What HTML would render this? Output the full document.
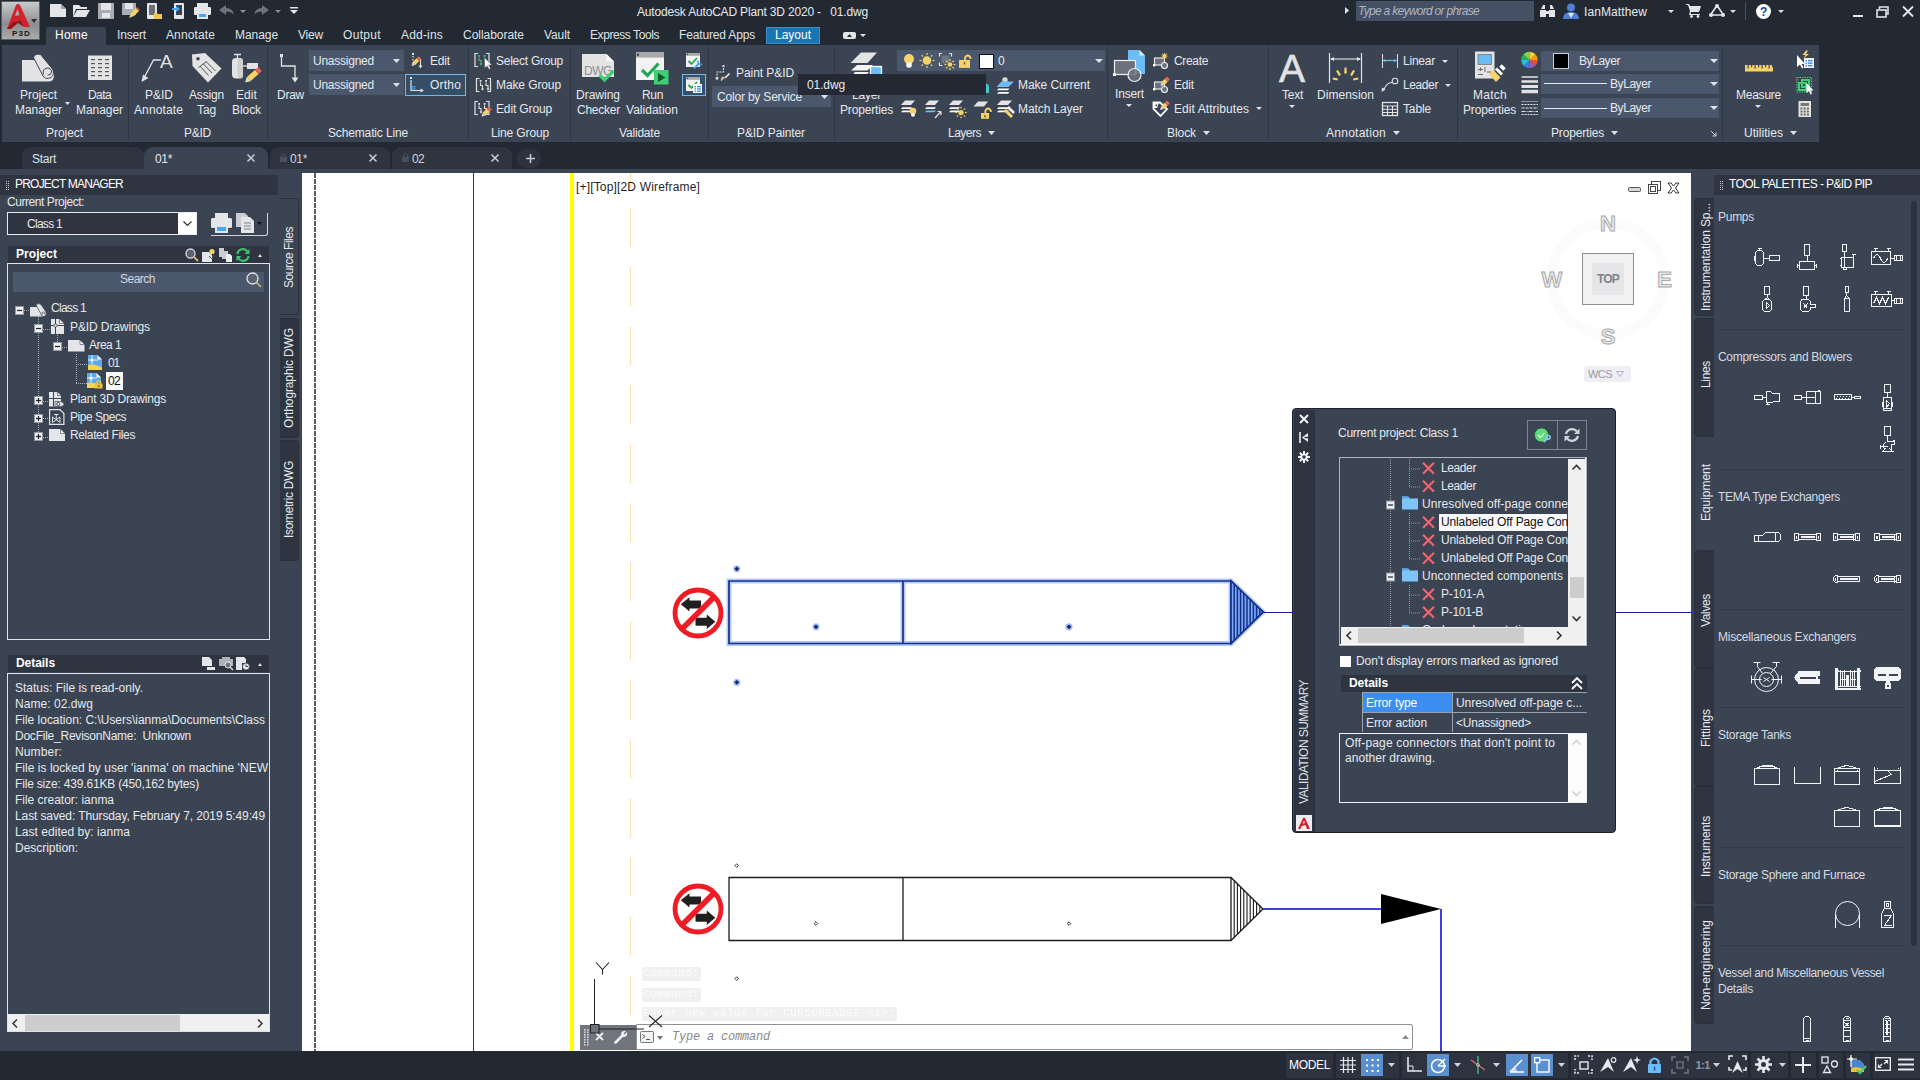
<!DOCTYPE html>
<html lang="en"><head><meta charset="utf-8"><title>Autodesk AutoCAD Plant 3D 2020 - 01.dwg</title>
<style>
html,body{margin:0;padding:0;}
body{width:1920px;height:1080px;overflow:hidden;position:relative;background:#222933;font-family:"Liberation Sans",sans-serif;font-size:12px;color:#e6e9ee;}
div,span.t,svg{position:absolute;}
span.t{white-space:pre;}
svg{overflow:visible;}
</style></head><body>
<div style="left:0px;top:0px;width:1920px;height:45px;background:#222933;"></div>
<div style="left:1px;top:1px;width:39px;height:39px;background:linear-gradient(#c9cacc,#8b8d90 60%,#a9abad);border:1px solid #5a5d63;box-sizing:border-box;"></div>
<svg style="left:4px;top:2px;" width="28" height="30" viewBox="0 0 28 30"><path d="M3 27 L12 3 Q14 1 16 3 L26 25 L20 25 L17 18 L9 20 L7 27Z M11 14 L15.5 13 L13.5 7Z" fill="#d3222a" fill-rule="evenodd"/><path d="M3 27 L9 20 L17 18 L20 25 L14 21 L7 27Z" fill="#9c1118"/></svg>
<span class="t" style="left:12px;top:23.5px;height:20px;line-height:20px;font-size:8px;color:#1a1a1a;letter-spacing:1.146px;font-weight:bold;">P3D</span>
<svg style="left:31px;top:19px;" width="6" height="4" viewBox="0 0 6 4"><path d="M0 0H6L3.0 4Z" fill="#2a2d33"/></svg>
<svg style="left:50px;top:4px;" width="17" height="14" viewBox="0 0 17 14"><path d="M0 0H11L16 5V13H0Z" fill="#e3e5e8"/><path d="M11 0V5H16" fill="#9fa4ab"/></svg>
<svg style="left:73px;top:4px;" width="17" height="14" viewBox="0 0 17 14"><path d="M0 1H6L8 3H14V5H3L0 13Z" fill="#e3e5e8"/><path d="M4 6H17L13 13H0Z" fill="#e3e5e8"/></svg>
<svg style="left:98px;top:3px;" width="16" height="16" viewBox="0 0 16 16"><path d="M0 0H16V16H0Z" fill="#a9adb3"/><path d="M3 0H13V7H3Z" fill="#e3e5e8"/><path d="M4 10H12V15H4Z" fill="#e3e5e8"/></svg>
<svg style="left:122px;top:3px;" width="17" height="16" viewBox="0 0 17 16"><path d="M0 0H14V12H0Z" fill="#a9adb3"/><path d="M3 0H11V6H3Z" fill="#e3e5e8"/><path d="M7 15L9 10L14 5L17 8L12 13Z" fill="#f0d36a"/><path d="M14 5L15 4L18 7L17 8Z" fill="#e0524a"/></svg>
<svg style="left:147px;top:3px;" width="16" height="16" viewBox="0 0 16 16"><rect x="0" y="0" width="10" height="16" rx="1" fill="#e3e5e8"/><rect x="2" y="2" width="6" height="10" fill="#6a6f78"/><path d="M7 10H10L11 11H15V16H7Z" fill="#f1c84b"/></svg>
<svg style="left:172px;top:3px;" width="13" height="16" viewBox="0 0 13 16"><rect x="2" y="0" width="10" height="16" rx="1" fill="#e3e5e8"/><rect x="4" y="2" width="6" height="10" fill="#3a4150"/><path d="M0 5H4V3L8 6L4 9V7H0Z" fill="#3fa9f5"/></svg>
<svg style="left:194px;top:3px;" width="17" height="16" viewBox="0 0 17 16"><path d="M3 0H14V5H3Z" fill="#e3e5e8"/><rect x="0" y="4" width="17" height="8" rx="1" fill="#e3e5e8"/><path d="M3 9H14V16H3Z" fill="#e3e5e8"/><rect x="5" y="11" width="7" height="3" fill="#3fa9f5"/></svg>
<svg style="left:219px;top:5px;" width="15" height="10" viewBox="0 0 15 10"><path d="M0 5L7 0V3Q14 3 15 10Q12 6 7 7V10Z" fill="#6d737d"/></svg>
<svg style="left:240px;top:10px;" width="6" height="3" viewBox="0 0 6 3"><path d="M0 0H6L3.0 3Z" fill="#8b9098"/></svg>
<svg style="left:254px;top:5px;" width="15" height="10" viewBox="0 0 15 10"><path d="M15 5L8 0V3Q1 3 0 10Q3 6 8 7V10Z" fill="#6d737d"/></svg>
<svg style="left:275px;top:10px;" width="6" height="3" viewBox="0 0 6 3"><path d="M0 0H6L3.0 3Z" fill="#8b9098"/></svg>
<svg style="left:290px;top:7px;" width="8" height="7" viewBox="0 0 8 7"><path d="M0 0H8V1.5H0Z M0 3H8L4 7Z" fill="#e3e5e8"/></svg>
<span class="t" style="left:637px;top:2px;height:20px;line-height:20px;font-size:12px;color:#e6e9ee;letter-spacing:-0.174px;">Autodesk AutoCAD Plant 3D 2020 -   01.dwg</span>
<svg style="left:1345px;top:7px;" width="4" height="7" viewBox="0 0 4 7"><path d="M0 0L4 3.5L0 7Z" fill="#e3e5e8"/></svg>
<div style="left:1356px;top:1px;width:178px;height:20px;background:#465064;"></div>
<span class="t" style="left:1358px;top:1px;height:20px;line-height:20px;font-size:12px;color:#aeb6c2;letter-spacing:-0.702px;font-style:italic;">Type a keyword or phrase</span>
<svg style="left:1540px;top:4px;" width="15" height="14" viewBox="0 0 15 14"><path d="M1 5L3 1H5V5ZM10 5V1H12L14 5Z M0 6H6V13H0Z M9 6H15V13H9Z M6 7H9V10H6Z" fill="#e3e5e8"/></svg>
<svg style="left:1563px;top:3px;" width="16" height="16" viewBox="0 0 16 16"><circle cx="8" cy="4.5" r="4" fill="#4f7fd6"/><path d="M0 16Q0 9 8 9Q16 9 16 16Z" fill="#4f7fd6"/><path d="M5 10L8 15L11 10Z" fill="#e3e5e8"/></svg>
<span class="t" style="left:1584px;top:2px;height:20px;line-height:20px;font-size:12px;color:#e6e9ee;letter-spacing:0.097px;">IanMatthew</span>
<svg style="left:1668px;top:10px;" width="6" height="3" viewBox="0 0 6 3"><path d="M0 0H6L3.0 3Z" fill="#dfe3e8"/></svg>
<svg style="left:1686px;top:4px;" width="15" height="14" viewBox="0 0 15 14"><path d="M0 0H3L4 2H15L13 8H5L4.5 10H14V11H3L4 7L2 1H0Z" fill="#e3e5e8"/><circle cx="5.5" cy="12.5" r="1.4" fill="#e3e5e8"/><circle cx="12" cy="12.5" r="1.4" fill="#e3e5e8"/></svg>
<svg style="left:1709px;top:4px;" width="16" height="13" viewBox="0 0 16 13"><path d="M8 1.5L1.5 11H14.5Z" fill="none" stroke="#e3e5e8" stroke-width="1.6"/><circle cx="8" cy="2" r="2" fill="#e3e5e8"/><circle cx="2" cy="11" r="2" fill="#e3e5e8"/><circle cx="14" cy="11" r="2" fill="#e3e5e8"/></svg>
<svg style="left:1730px;top:10px;" width="6" height="3" viewBox="0 0 6 3"><path d="M0 0H6L3.0 3Z" fill="#dfe3e8"/></svg>
<div style="left:1745px;top:2px;width:1px;height:18px;background:#4a5363;"></div>
<svg style="left:1756px;top:4px;" width="15" height="15" viewBox="0 0 15 15"><circle cx="7.5" cy="7.5" r="7.5" fill="#fff"/></svg>
<span class="t" style="left:1760px;top:2px;height:20px;line-height:20px;font-size:12px;color:#1c3fa8;font-weight:bold;">?</span>
<svg style="left:1778px;top:10px;" width="6" height="3" viewBox="0 0 6 3"><path d="M0 0H6L3.0 3Z" fill="#dfe3e8"/></svg>
<div style="left:1853px;top:15px;width:10px;height:2px;background:#e3e5e8;"></div>
<svg style="left:1876px;top:6px;" width="13" height="12" viewBox="0 0 13 12"><path d="M3.5 3V1H12V8H10" fill="none" stroke="#e3e5e8" stroke-width="1.6"/><rect x="1" y="4" width="9" height="7" fill="none" stroke="#e3e5e8" stroke-width="1.6"/></svg>
<svg style="left:1902px;top:6px;" width="12" height="11" viewBox="0 0 12 11"><path d="M1 0.5L11 10.5M11 0.5L1 10.5" stroke="#e3e5e8" stroke-width="1.8"/></svg>
<div style="left:46px;top:27px;width:60px;height:19px;background:#3b4453;border-radius:2px 2px 0 0;"></div>
<span class="t" style="left:55px;top:25px;height:20px;line-height:20px;font-size:12px;color:#ffffff;letter-spacing:0.248px;">Home</span>
<span class="t" style="left:117px;top:25px;height:20px;line-height:20px;font-size:12px;color:#dfe3e8;letter-spacing:-0.169px;">Insert</span>
<span class="t" style="left:166px;top:25px;height:20px;line-height:20px;font-size:12px;color:#dfe3e8;letter-spacing:0.120px;">Annotate</span>
<span class="t" style="left:235px;top:25px;height:20px;line-height:20px;font-size:12px;color:#dfe3e8;letter-spacing:-0.061px;">Manage</span>
<span class="t" style="left:298px;top:25px;height:20px;line-height:20px;font-size:12px;color:#dfe3e8;letter-spacing:-0.198px;">View</span>
<span class="t" style="left:343px;top:25px;height:20px;line-height:20px;font-size:12px;color:#dfe3e8;letter-spacing:0.329px;">Output</span>
<span class="t" style="left:401px;top:25px;height:20px;line-height:20px;font-size:12px;color:#dfe3e8;letter-spacing:0.187px;">Add-ins</span>
<span class="t" style="left:463px;top:25px;height:20px;line-height:20px;font-size:12px;color:#dfe3e8;letter-spacing:-0.034px;">Collaborate</span>
<span class="t" style="left:544px;top:25px;height:20px;line-height:20px;font-size:12px;color:#dfe3e8;letter-spacing:-0.092px;">Vault</span>
<span class="t" style="left:590px;top:25px;height:20px;line-height:20px;font-size:12px;color:#dfe3e8;letter-spacing:-0.421px;">Express Tools</span>
<span class="t" style="left:679px;top:25px;height:20px;line-height:20px;font-size:12px;color:#dfe3e8;letter-spacing:-0.158px;">Featured Apps</span>
<div style="left:766px;top:27px;width:54px;height:16.5px;background:#1a76b0;"></div>
<div style="left:766px;top:27px;width:54px;height:16.500px;box-sizing:border-box;border:1px solid #3c8fc4;"></div>
<span class="t" style="left:775px;top:25px;height:20px;line-height:20px;font-size:12px;color:#ffffff;letter-spacing:-0.005px;">Layout</span>
<svg style="left:843px;top:32px;" width="13" height="7" viewBox="0 0 13 7"><rect x="0" y="0" width="13" height="7" rx="2" fill="#e3e5e8"/><path d="M4 5L6.5 2L9 5Z" fill="#222933"/></svg>
<svg style="left:860px;top:34px;" width="6" height="3" viewBox="0 0 6 3"><path d="M0 0H6L3.0 3Z" fill="#dfe3e8"/></svg>
<div style="left:2px;top:45px;width:1817px;height:97px;background:#3b4453;"></div>
<div style="left:128px;top:46px;width:1px;height:95px;background:#2f3744;"></div>
<div style="left:267px;top:46px;width:1px;height:95px;background:#2f3744;"></div>
<div style="left:468px;top:46px;width:1px;height:95px;background:#2f3744;"></div>
<div style="left:570px;top:46px;width:1px;height:95px;background:#2f3744;"></div>
<div style="left:708px;top:46px;width:1px;height:95px;background:#2f3744;"></div>
<div style="left:834px;top:46px;width:1px;height:95px;background:#2f3744;"></div>
<div style="left:1107px;top:46px;width:1px;height:95px;background:#2f3744;"></div>
<div style="left:1268px;top:46px;width:1px;height:95px;background:#2f3744;"></div>
<div style="left:1457px;top:46px;width:1px;height:95px;background:#2f3744;"></div>
<div style="left:1722px;top:46px;width:1px;height:95px;background:#2f3744;"></div>
<span class="t" style="left:46px;top:123px;height:20px;line-height:20px;font-size:12px;color:#e6e9ee;letter-spacing:-0.050px;">Project</span>
<span class="t" style="left:184px;top:123px;height:20px;line-height:20px;font-size:12px;color:#e6e9ee;letter-spacing:-0.252px;">P&amp;ID</span>
<span class="t" style="left:328px;top:123px;height:20px;line-height:20px;font-size:12px;color:#e6e9ee;letter-spacing:-0.146px;">Schematic Line</span>
<span class="t" style="left:491px;top:123px;height:20px;line-height:20px;font-size:12px;color:#e6e9ee;letter-spacing:-0.137px;">Line Group</span>
<span class="t" style="left:619px;top:123px;height:20px;line-height:20px;font-size:12px;color:#e6e9ee;letter-spacing:-0.184px;">Validate</span>
<span class="t" style="left:737px;top:123px;height:20px;line-height:20px;font-size:12px;color:#e6e9ee;letter-spacing:-0.114px;">P&amp;ID Painter</span>
<span class="t" style="left:948px;top:123px;height:20px;line-height:20px;font-size:12px;color:#e6e9ee;letter-spacing:-0.503px;">Layers</span>
<svg style="left:988px;top:131px;" width="7" height="4" viewBox="0 0 7 4"><path d="M0 0H7L3.5 4Z" fill="#dfe3e8"/></svg>
<span class="t" style="left:1167px;top:123px;height:20px;line-height:20px;font-size:12px;color:#e6e9ee;letter-spacing:-0.069px;">Block</span>
<svg style="left:1203px;top:131px;" width="7" height="4" viewBox="0 0 7 4"><path d="M0 0H7L3.5 4Z" fill="#dfe3e8"/></svg>
<span class="t" style="left:1326px;top:123px;height:20px;line-height:20px;font-size:12px;color:#e6e9ee;letter-spacing:0.262px;">Annotation</span>
<svg style="left:1393px;top:131px;" width="7" height="4" viewBox="0 0 7 4"><path d="M0 0H7L3.5 4Z" fill="#dfe3e8"/></svg>
<span class="t" style="left:1551px;top:123px;height:20px;line-height:20px;font-size:12px;color:#e6e9ee;letter-spacing:-0.169px;">Properties</span>
<svg style="left:1611px;top:131px;" width="7" height="4" viewBox="0 0 7 4"><path d="M0 0H7L3.5 4Z" fill="#dfe3e8"/></svg>
<span class="t" style="left:1744px;top:123px;height:20px;line-height:20px;font-size:12px;color:#e6e9ee;letter-spacing:0.036px;">Utilities</span>
<svg style="left:1790px;top:131px;" width="7" height="4" viewBox="0 0 7 4"><path d="M0 0H7L3.5 4Z" fill="#dfe3e8"/></svg>
<svg style="left:1711px;top:131px;" width="6" height="6" viewBox="0 0 6 6"><path d="M0 0L5 5M5 1.5V5H1.5" stroke="#cfd4db" stroke-width="1" fill="none"/></svg>
<span class="t" style="left:20px;top:85px;height:20px;line-height:20px;font-size:12px;color:#e6e9ee;letter-spacing:-0.050px;">Project</span>
<span class="t" style="left:15px;top:100px;height:20px;line-height:20px;font-size:12px;color:#e6e9ee;letter-spacing:-0.052px;">Manager</span>
<span class="t" style="left:88px;top:85px;height:20px;line-height:20px;font-size:12px;color:#e6e9ee;letter-spacing:-0.587px;">Data</span>
<span class="t" style="left:76px;top:100px;height:20px;line-height:20px;font-size:12px;color:#e6e9ee;letter-spacing:-0.052px;">Manager</span>
<span class="t" style="left:145px;top:85px;height:20px;line-height:20px;font-size:12px;color:#e6e9ee;letter-spacing:-0.002px;">P&amp;ID</span>
<span class="t" style="left:134px;top:100px;height:20px;line-height:20px;font-size:12px;color:#e6e9ee;letter-spacing:0.120px;">Annotate</span>
<span class="t" style="left:189px;top:85px;height:20px;line-height:20px;font-size:12px;color:#e6e9ee;letter-spacing:-0.170px;">Assign</span>
<span class="t" style="left:197px;top:100px;height:20px;line-height:20px;font-size:12px;color:#e6e9ee;letter-spacing:-0.116px;">Tag</span>
<span class="t" style="left:236px;top:85px;height:20px;line-height:20px;font-size:12px;color:#e6e9ee;letter-spacing:0.081px;">Edit</span>
<span class="t" style="left:232px;top:100px;height:20px;line-height:20px;font-size:12px;color:#e6e9ee;letter-spacing:-0.069px;">Block</span>
<span class="t" style="left:277px;top:85px;height:20px;line-height:20px;font-size:12px;color:#e6e9ee;letter-spacing:-0.251px;">Draw</span>
<span class="t" style="left:576px;top:85px;height:20px;line-height:20px;font-size:12px;color:#e6e9ee;letter-spacing:-0.002px;">Drawing</span>
<span class="t" style="left:577px;top:100px;height:20px;line-height:20px;font-size:12px;color:#e6e9ee;letter-spacing:-0.241px;">Checker</span>
<span class="t" style="left:642px;top:85px;height:20px;line-height:20px;font-size:12px;color:#e6e9ee;letter-spacing:-0.338px;">Run</span>
<span class="t" style="left:626px;top:100px;height:20px;line-height:20px;font-size:12px;color:#e6e9ee;letter-spacing:0.019px;">Validation</span>
<span class="t" style="left:840px;top:100px;height:20px;line-height:20px;font-size:12px;color:#e6e9ee;letter-spacing:-0.169px;">Properties</span>
<span class="t" style="left:1115px;top:84px;height:20px;line-height:20px;font-size:12px;color:#e6e9ee;letter-spacing:-0.169px;">Insert</span>
<span class="t" style="left:1282px;top:84.5px;height:20px;line-height:20px;font-size:12px;color:#e6e9ee;letter-spacing:-0.252px;">Text</span>
<span class="t" style="left:1317px;top:84.5px;height:20px;line-height:20px;font-size:12px;color:#e6e9ee;letter-spacing:0.034px;">Dimension</span>
<span class="t" style="left:1473px;top:84.5px;height:20px;line-height:20px;font-size:12px;color:#e6e9ee;letter-spacing:0.264px;">Match</span>
<span class="t" style="left:1463px;top:100px;height:20px;line-height:20px;font-size:12px;color:#e6e9ee;letter-spacing:-0.169px;">Properties</span>
<span class="t" style="left:1736px;top:85px;height:20px;line-height:20px;font-size:12px;color:#e6e9ee;letter-spacing:-0.241px;">Measure</span>
<span class="t" style="left:852px;top:85px;height:20px;line-height:20px;font-size:12px;color:#e6e9ee;letter-spacing:-0.204px;">Layer</span>
<svg style="left:65px;top:102px;" width="5" height="3" viewBox="0 0 5 3"><path d="M0 0H5L2.5 3Z" fill="#dfe3e8"/></svg>
<svg style="left:1126px;top:104px;" width="6" height="3" viewBox="0 0 6 3"><path d="M0 0H6L3.0 3Z" fill="#dfe3e8"/></svg>
<svg style="left:1289px;top:105px;" width="6" height="3" viewBox="0 0 6 3"><path d="M0 0H6L3.0 3Z" fill="#dfe3e8"/></svg>
<svg style="left:1755px;top:105px;" width="6" height="3" viewBox="0 0 6 3"><path d="M0 0H6L3.0 3Z" fill="#dfe3e8"/></svg>
<span class="t" style="left:430px;top:51px;height:20px;line-height:20px;font-size:12px;color:#e6e9ee;letter-spacing:-0.169px;">Edit</span>
<span class="t" style="left:496px;top:50.5px;height:20px;line-height:20px;font-size:12px;color:#e6e9ee;letter-spacing:-0.253px;">Select Group</span>
<span class="t" style="left:496px;top:75px;height:20px;line-height:20px;font-size:12px;color:#e6e9ee;letter-spacing:-0.103px;">Make Group</span>
<span class="t" style="left:496px;top:98.5px;height:20px;line-height:20px;font-size:12px;color:#e6e9ee;letter-spacing:-0.136px;">Edit Group</span>
<span class="t" style="left:736px;top:62.5px;height:20px;line-height:20px;font-size:12px;color:#e6e9ee;letter-spacing:-0.069px;">Paint P&amp;ID</span>
<span class="t" style="left:1018px;top:75px;height:20px;line-height:20px;font-size:12px;color:#e6e9ee;letter-spacing:-0.058px;">Make Current</span>
<span class="t" style="left:1018px;top:99px;height:20px;line-height:20px;font-size:12px;color:#e6e9ee;letter-spacing:-0.094px;">Match Layer</span>
<span class="t" style="left:1174px;top:51px;height:20px;line-height:20px;font-size:12px;color:#e6e9ee;letter-spacing:-0.336px;">Create</span>
<span class="t" style="left:1174px;top:75px;height:20px;line-height:20px;font-size:12px;color:#e6e9ee;letter-spacing:-0.169px;">Edit</span>
<span class="t" style="left:1174px;top:99px;height:20px;line-height:20px;font-size:12px;color:#e6e9ee;letter-spacing:0.064px;">Edit Attributes</span>
<span class="t" style="left:1403px;top:51px;height:20px;line-height:20px;font-size:12px;color:#e6e9ee;letter-spacing:-0.226px;">Linear</span>
<span class="t" style="left:1403px;top:75px;height:20px;line-height:20px;font-size:12px;color:#e6e9ee;letter-spacing:-0.394px;">Leader</span>
<span class="t" style="left:1403px;top:99px;height:20px;line-height:20px;font-size:12px;color:#e6e9ee;letter-spacing:-0.138px;">Table</span>
<svg style="left:1256px;top:107px;" width="6" height="3" viewBox="0 0 6 3"><path d="M0 0H6L3.0 3Z" fill="#dfe3e8"/></svg>
<svg style="left:1442px;top:60px;" width="6" height="3" viewBox="0 0 6 3"><path d="M0 0H6L3.0 3Z" fill="#dfe3e8"/></svg>
<svg style="left:1445px;top:84px;" width="6" height="3" viewBox="0 0 6 3"><path d="M0 0H6L3.0 3Z" fill="#dfe3e8"/></svg>
<div style="left:309px;top:50px;width:95px;height:21px;background:#4b576c;"></div>
<span class="t" style="left:313px;top:51px;height:20px;line-height:20px;font-size:12px;color:#e6e9ee;letter-spacing:-0.238px;">Unassigned</span>
<svg style="left:393px;top:59px;" width="7" height="4" viewBox="0 0 7 4"><path d="M0 0H7L3.5 4Z" fill="#dfe3e8"/></svg>
<div style="left:309px;top:74px;width:95px;height:21px;background:#4b576c;"></div>
<span class="t" style="left:313px;top:75px;height:20px;line-height:20px;font-size:12px;color:#e6e9ee;letter-spacing:-0.238px;">Unassigned</span>
<svg style="left:393px;top:83px;" width="7" height="4" viewBox="0 0 7 4"><path d="M0 0H7L3.5 4Z" fill="#dfe3e8"/></svg>
<div style="left:405px;top:74px;width:61px;height:22px;box-sizing:border-box;border:1px solid #74b7e8;background:#364d66;"></div>
<span class="t" style="left:430px;top:75px;height:20px;line-height:20px;font-size:12px;color:#e6e9ee;letter-spacing:0.198px;">Ortho</span>
<div style="left:712px;top:86px;width:119px;height:21px;background:#4b576c;"></div>
<span class="t" style="left:717px;top:86.5px;height:20px;line-height:20px;font-size:12px;color:#e6e9ee;letter-spacing:-0.189px;">Color by Service</span>
<svg style="left:821px;top:95px;" width="7" height="4" viewBox="0 0 7 4"><path d="M0 0H7L3.5 4Z" fill="#dfe3e8"/></svg>
<div style="left:897px;top:50px;width:208px;height:21px;background:#4b576c;"></div>
<span class="t" style="left:998px;top:51px;height:20px;line-height:20px;font-size:12px;color:#e6e9ee;">0</span>
<svg style="left:1095px;top:59px;" width="8" height="4" viewBox="0 0 8 4"><path d="M0 0H8L4.0 4Z" fill="#dfe3e8"/></svg>
<div style="left:979px;top:54px;width:15px;height:15px;box-sizing:border-box;background:#fff;border:1px solid #111;"></div>
<div style="left:1541px;top:50.5px;width:178px;height:20.5px;background:#4b576c;"></div>
<svg style="left:1710px;top:59px;" width="8" height="4" viewBox="0 0 8 4"><path d="M0 0H8L4.0 4Z" fill="#dfe3e8"/></svg>
<div style="left:1553px;top:53px;width:16px;height:16px;box-sizing:border-box;background:#000;border:1px solid #c9ced6;"></div>
<span class="t" style="left:1579px;top:51px;height:20px;line-height:20px;font-size:12px;color:#e6e9ee;letter-spacing:-0.432px;">ByLayer</span>
<div style="left:1541px;top:73.5px;width:178px;height:20.5px;background:#4b576c;"></div>
<svg style="left:1710px;top:82px;" width="8" height="4" viewBox="0 0 8 4"><path d="M0 0H8L4.0 4Z" fill="#dfe3e8"/></svg>
<div style="left:1544px;top:83px;width:63px;height:1px;background:#e6e9ee;"></div>
<span class="t" style="left:1610px;top:73.5px;height:20px;line-height:20px;font-size:12px;color:#e6e9ee;letter-spacing:-0.432px;">ByLayer</span>
<div style="left:1541px;top:97.8px;width:178px;height:20.5px;background:#4b576c;"></div>
<svg style="left:1710px;top:106.3px;" width="8" height="4" viewBox="0 0 8 4"><path d="M0 0H8L4.0 4Z" fill="#dfe3e8"/></svg>
<div style="left:1544px;top:108px;width:63px;height:1px;background:#e6e9ee;"></div>
<span class="t" style="left:1610px;top:98.3px;height:20px;line-height:20px;font-size:12px;color:#e6e9ee;letter-spacing:-0.432px;">ByLayer</span>
<div style="left:0px;top:169px;width:1920px;height:4px;background:#3b4453;"></div>
<div style="left:22px;top:147px;width:122px;height:22px;background:#2e3541;border-radius:9px 9px 0 0;"></div>
<div style="left:270px;top:147px;width:120px;height:22px;background:#2e3541;border-radius:9px 9px 0 0;"></div>
<div style="left:392px;top:147px;width:120px;height:22px;background:#2e3541;border-radius:9px 9px 0 0;"></div>
<div style="left:517px;top:149px;width:24px;height:19px;background:#2c333f;border-radius:9px;"></div>
<div style="left:144px;top:147px;width:124px;height:22px;background:#3b4453;border-radius:9px 9px 0 0;"></div>
<span class="t" style="left:32px;top:149px;height:20px;line-height:20px;font-size:12px;color:#dfe3e8;letter-spacing:-0.268px;">Start</span>
<span class="t" style="left:155px;top:149px;height:20px;line-height:20px;font-size:12px;color:#e6e9ee;letter-spacing:-0.339px;">01*</span>
<span class="t" style="left:290px;top:149px;height:20px;line-height:20px;font-size:12px;color:#cfd4db;letter-spacing:-0.339px;">01*</span>
<span class="t" style="left:412px;top:149px;height:20px;line-height:20px;font-size:12px;color:#cfd4db;letter-spacing:-0.674px;">02</span>
<svg style="left:247px;top:153.5px;" width="8" height="8" viewBox="0 0 8 8"><path d="M0.5 0.5L7.5 7.5M7.5 0.5L0.5 7.5" stroke="#c3c8cf" stroke-width="1.6"/></svg>
<svg style="left:369px;top:153.5px;" width="8" height="8" viewBox="0 0 8 8"><path d="M0.5 0.5L7.5 7.5M7.5 0.5L0.5 7.5" stroke="#c3c8cf" stroke-width="1.6"/></svg>
<svg style="left:491px;top:153.5px;" width="8" height="8" viewBox="0 0 8 8"><path d="M0.5 0.5L7.5 7.5M7.5 0.5L0.5 7.5" stroke="#c3c8cf" stroke-width="1.6"/></svg>
<svg style="left:526px;top:154px;" width="9" height="9" viewBox="0 0 9 9"><path d="M4.5 0V9M0 4.5H9" stroke="#c3c8cf" stroke-width="1.6"/></svg>
<svg style="left:280px;top:153px;" width="7" height="9" viewBox="0 0 7 9"><rect x="0" y="4" width="7" height="5" fill="#4a505b"/><path d="M1.5 4V2Q3.5 0 5.5 2V4" stroke="#4a505b" fill="none"/></svg>
<svg style="left:402px;top:153px;" width="7" height="9" viewBox="0 0 7 9"><rect x="0" y="4" width="7" height="5" fill="#4a505b"/><path d="M1.5 4V2Q3.5 0 5.5 2V4" stroke="#4a505b" fill="none"/></svg>
<svg style="left:0;top:0" width="1920" height="150" viewBox="0 0 1920 150"><path d="M22 60H36L48 74Q54 70 54 76Q54 81.500 48 81.500H22Z" fill="#e3e3e3"/><path d="M33.500 57.500Q35 53 40.500 54.500L52.500 69Q55 74 51 77.500Q46 80 43 76Z" fill="#e3e3e3" stroke="#3b4453" stroke-width="1"/><path d="M43.500 74.500Q42 69 47 68Q51.500 68 51.500 72Q51 75.500 47.500 75" fill="none" stroke="#3b4453" stroke-width="1"/><rect x="88" y="55.500" width="24" height="24.500" fill="#e3e3e3"/><rect x="91" y="59" width="4" height="1.200" fill="#555"/><rect x="98" y="59" width="4" height="1.200" fill="#555"/><rect x="105" y="59" width="4" height="1.200" fill="#555"/><rect x="91" y="63" width="4" height="1.200" fill="#555"/><rect x="98" y="63" width="4" height="1.200" fill="#555"/><rect x="105" y="63" width="4" height="1.200" fill="#555"/><rect x="91" y="67" width="4" height="1.200" fill="#555"/><rect x="98" y="67" width="4" height="1.200" fill="#555"/><rect x="105" y="67" width="4" height="1.200" fill="#555"/><rect x="91" y="71" width="4" height="1.200" fill="#555"/><rect x="98" y="71" width="4" height="1.200" fill="#555"/><rect x="105" y="71" width="4" height="1.200" fill="#555"/><rect x="91" y="75" width="4" height="1.200" fill="#555"/><rect x="98" y="75" width="4" height="1.200" fill="#555"/><rect x="105" y="75" width="4" height="1.200" fill="#555"/><path d="M161 60H153.500L144.500 77" stroke="#e3e3e3" stroke-width="1.300" fill="none"/><path d="M141.500 82L143 74.500L148.500 78Z" fill="#e3e3e3"/><path d="M192 54.500L205 53L221.500 68.500L208 82.500L192.500 66Z" fill="#e3e3e3"/><circle cx="198" cy="58.700" r="1.800" fill="#3b4453"/><path d="M205 62L199 68M208 65L211.500 69M205.500 68.500L214 77.500 M203 71L209 77.500M211 62.500L217 69" stroke="#6a6a6a" stroke-width=".0"/><g stroke="#555" stroke-width="1" fill="none"><path d="M198.500 67.500L206.500 61.500 M203 63.500L212 73 M206 61.500L215.500 71 M200 66L208.500 75.500"/></g><rect x="232" y="58" width="11" height="20.500" rx="4" fill="#e3e3e3"/><rect x="237.500" y="58" width="5.500" height="20.500" rx="3" fill="#cfcfcf"/><path d="M234 54.500H241M237.500 54.500V58" stroke="#e3e3e3" stroke-width="1.300"/><path d="M243 66H247" stroke="#e3e3e3" stroke-width="1.300"/><rect x="247" y="63" width="11" height="6" fill="#e3e3e3"/><path d="M245.0 82.5L250.5 81.2L246.8 77.1Z" fill="#dcdcdc"/><path d="M250.5 81.2L258.6 74.0L254.9 69.9L246.8 77.1Z" fill="#f6d26b"/><path d="M258.6 74.0L261.8 71.0L258.2 67.0L254.9 69.9Z" fill="#e9635a"/><rect x="280" y="54" width="3" height="3" fill="#e3e3e3"/><path d="M281.500 57V66H295V78" stroke="#e3e3e3" stroke-width="1.300" fill="none"/><path d="M291.500 77.500H298.500L295 82.500Z" fill="#e3e3e3"/><rect x="412" y="53" width="2" height="2" fill="#e3e3e3"/><path d="M413 56V64" stroke="#e3e3e3" stroke-width="1.200" stroke-dasharray="1.500 1.500"/><path d="M420.500 59V67" stroke="#e3e3e3" stroke-width="1.100"/><path d="M418.500 65.500H422.500L420.500 68.500Z" fill="#e3e3e3"/><path d="M411.5 66.0L415.3 64.9L412.6 62.2Z" fill="#dcdcdc"/><path d="M415.3 64.9L419.2 61.0L416.5 58.3L412.6 62.2Z" fill="#f6d26b"/><path d="M419.2 61.0L421.3 58.8L418.7 56.2L416.5 58.3Z" fill="#e9635a"/><rect x="410" y="77" width="2" height="2" fill="#e3e3e3"/><path d="M411 80V90.500H421" stroke="#e3e3e3" stroke-width="1.200" fill="none"/><path d="M420.500 88.500L424 90.500L420.500 92.500Z" fill="#e3e3e3"/><rect x="412.500" y="86.500" width="2.500" height="2.500" fill="none" stroke="#4a9df0" stroke-width=".9"/><path d="M478 53.5H475V66.5H478 M486 53.5H489V66.5H486" stroke="#e3e3e3" stroke-width="1.200" fill="none"/><rect x="478.2" y="55" width="1.800" height="1.800" fill="#43c26d"/><path d="M479 57.5V60.5H481V64" stroke="#43c26d" stroke-width="1.100" fill="none"/><path d="M479.5 63.5H482.5L481 65.8Z" fill="#43c26d"/><rect x="483.7" y="55" width="1.800" height="1.800" fill="#43c26d"/><path d="M484.5 57.5V60.5H486.5V64" stroke="#43c26d" stroke-width="1.100" fill="none"/><path d="M485.0 63.5H488.0L486.5 65.8Z" fill="#43c26d"/><path d="M484.500 57.500V68L487 65.500L489 69.500L490.500 68.700L488.700 65H492Z" fill="#fff" stroke="#3b4453" stroke-width=".5"/><path d="M479.5 78.5H476.5V91.5H479.5 M487.5 78.5H490.5V91.5H487.5" stroke="#e3e3e3" stroke-width="1.200" fill="none"/><rect x="479.7" y="80" width="1.800" height="1.800" fill="#e3e3e3"/><path d="M480.5 82.5V85.5H482.5V89" stroke="#e3e3e3" stroke-width="1.100" fill="none"/><path d="M481.0 88.5H484.0L482.5 90.8Z" fill="#e3e3e3"/><rect x="485.2" y="80" width="1.800" height="1.800" fill="#e3e3e3"/><path d="M486 82.5V85.5H488V89" stroke="#e3e3e3" stroke-width="1.100" fill="none"/><path d="M486.5 88.5H489.5L488 90.8Z" fill="#e3e3e3"/><path d="M478 101.5H475V114.5H478 M486 101.5H489V114.5H486" stroke="#e3e3e3" stroke-width="1.200" fill="none"/><rect x="478.2" y="103" width="1.800" height="1.800" fill="#e3e3e3"/><path d="M479 105.5V108.5H481V112" stroke="#e3e3e3" stroke-width="1.100" fill="none"/><path d="M479.5 111.5H482.5L481 113.8Z" fill="#e3e3e3"/><rect x="483.7" y="103" width="1.800" height="1.800" fill="#e3e3e3"/><path d="M484.5 105.5V108.5H486.5V112" stroke="#e3e3e3" stroke-width="1.100" fill="none"/><path d="M485.0 111.5H488.0L486.5 113.8Z" fill="#e3e3e3"/><path d="M481.5 116.5L485.7 115.4L482.8 112.4Z" fill="#dcdcdc"/><path d="M485.7 115.4L489.5 111.8L486.6 108.8L482.8 112.4Z" fill="#f6d26b"/><path d="M489.5 111.8L491.9 109.5L489.1 106.5L486.6 108.8Z" fill="#e9635a"/><path d="M582 54H606.500L614 61.500V77H582Z" fill="#e3e3e3"/><path d="M606.500 54V61.500H614Z" fill="#fafafa"/><rect x="636" y="52" width="28" height="28" fill="#f3f3f3"/><rect x="636" y="52" width="28" height="5.6" fill="#a9a9a9"/><rect x="637" y="53.7" width="2.0" height="2.0" fill="#333"/><path d="M642 70L647.500 75.500L658.500 63.500" stroke="#21a854" stroke-width="3.200" fill="none"/><rect x="654" y="70" width="14.500" height="14.500" fill="#3ecf74"/><path d="M658 73L665.500 77.500L658 82Z" fill="#0f5a28"/><rect x="686" y="53" width="14" height="14" fill="#f3f3f3"/><rect x="686" y="53" width="14" height="2.8" fill="#a9a9a9"/><rect x="687" y="53.8" width="1.0" height="1.0" fill="#333"/><path d="M688.500 61L691.500 64L697 58" stroke="#21a854" stroke-width="1.800" fill="none"/><path d="M694 68.500L699 63.500" stroke="#4a9df0" stroke-width="1.800"/><path d="M698.500 60.500A2.500 2.500 0 0 0 702 64" stroke="#4a9df0" stroke-width="1.600" fill="none"/><rect x="682.500" y="74.500" width="23" height="21" fill="#33506c" stroke="#74b7e8" stroke-width="1"/><rect x="686" y="77" width="14" height="14" fill="#f3f3f3"/><rect x="686" y="77" width="14" height="2.8" fill="#a9a9a9"/><rect x="687" y="77.8" width="1.0" height="1.0" fill="#333"/><path d="M688.500 85L691.500 88L697 82" stroke="#21a854" stroke-width="1.800" fill="none"/><rect x="693" y="84" width="9" height="9" fill="#fafafa"/><g fill="#3c8df0"><rect x="694.500" y="86" width="1.500" height="1.300"/><rect x="697" y="86" width="4" height="1.300"/><rect x="694.500" y="88.300" width="1.500" height="1.300"/><rect x="697" y="88.300" width="4" height="1.300"/><rect x="694.500" y="90.600" width="1.500" height="1.300"/><rect x="697" y="90.600" width="4" height="1.300"/></g><rect x="722.500" y="65" width="2" height="2" fill="#e3e3e3"/><path d="M723.500 68V72H717V78" stroke="#e3e3e3" stroke-width="1.100" fill="none" stroke-dasharray="2 1"/><path d="M715 77.500H719L717 80.500Z" fill="#e3e3e3"/><path d="M729.500 73.500L725 78" stroke="#f0f0f0" stroke-width="1.600"/><path d="M725.500 77L721 81.500Q720 79 722 76.500Z" fill="#e0b583"/><path d="M861 52.500H877L867.500 63H850.500Z" fill="#e3e3e3"/><path d="M857 65H873L867.500 70.500H851Z" fill="#f4f4f4"/><path d="M855 72H869L866 75.500H852Z" fill="#f4f4f4"/><rect x="870.500" y="66.500" width="11" height="10" fill="#6cbcf5" stroke="#fff" stroke-width="1.300"/></svg>
<span class="t" style="left:160px;top:52px;height:20px;line-height:20px;font-size:19px;color:#e3e3e3;">A</span>
<span class="t" style="left:584px;top:61px;height:20px;line-height:20px;font-size:12px;color:#8d8d8d;letter-spacing:-0.442px;">DWG</span>
<svg style="left:0;top:0" width="1920" height="150" viewBox="0 0 1920 150"><path d="M599.500 75L604.500 80L613.500 71" stroke="#3ecf74" stroke-width="3.200" fill="none"/><circle cx="909" cy="59" r="5" fill="#f6d26b"/><path d="M906.25 62.5H911.75V66.5Q909 69 906.25 66.5Z" fill="#f7f7f7"/><circle cx="927" cy="60.5" r="4.3" fill="#f6d26b"/><path d="M932.6 60.5L934.5 60.5" stroke="#f6d26b" stroke-width="1.200"/><path d="M931.0 64.5L932.3 65.8" stroke="#f6d26b" stroke-width="1.200"/><path d="M927.0 66.1L927.0 68.0" stroke="#f6d26b" stroke-width="1.200"/><path d="M923.0 64.5L921.7 65.8" stroke="#f6d26b" stroke-width="1.200"/><path d="M921.4 60.5L919.5 60.5" stroke="#f6d26b" stroke-width="1.200"/><path d="M923.0 56.5L921.7 55.2" stroke="#f6d26b" stroke-width="1.200"/><path d="M927.0 54.9L927.0 53.0" stroke="#f6d26b" stroke-width="1.200"/><path d="M931.0 56.5L932.3 55.2" stroke="#f6d26b" stroke-width="1.200"/><path d="M942 53.500H939.500V56.500 M949 53.500H951.500V56.500 M939.500 62.500V65.500H942.500" stroke="#e3e3e3" stroke-width="1.200" fill="none"/><rect x="941.500" y="55.500" width="8" height="8" fill="#6c7482"/><circle cx="950" cy="64.5" r="2.3" fill="#f6d26b"/><path d="M953.6 64.5L955.5 64.5" stroke="#f6d26b" stroke-width="1.200"/><path d="M952.5 67.0L953.9 68.4" stroke="#f6d26b" stroke-width="1.200"/><path d="M950.0 68.1L950.0 70.0" stroke="#f6d26b" stroke-width="1.200"/><path d="M947.5 67.0L946.1 68.4" stroke="#f6d26b" stroke-width="1.200"/><path d="M946.4 64.5L944.5 64.5" stroke="#f6d26b" stroke-width="1.200"/><path d="M947.5 62.0L946.1 60.6" stroke="#f6d26b" stroke-width="1.200"/><path d="M950.0 60.9L950.0 59.0" stroke="#f6d26b" stroke-width="1.200"/><path d="M952.5 62.0L953.9 60.6" stroke="#f6d26b" stroke-width="1.200"/><rect x="959" y="60" width="11" height="7.9" fill="#f6d26b"/><rect x="963.8" y="62" width="1.400" height="2.500" fill="#6b5a1e"/><path d="M965.05 60V57.5Q967.75 53.5 970.4499999999999 57.5V59" stroke="#f6d26b" stroke-width="1.800" fill="none"/><circle cx="1005" cy="80" r="2.700" fill="#d9d9d9"/><path d="M1001.500 81.500H1014L1008.500 87H996.500Z" fill="#6cbcf5"/><path d="M998.500 88.500H1009.500L1008 90.300H997Z M998.500 92H1009.500L1008 93.800H997Z" fill="#fff"/><path d="M998.5 110.4H1009L1007.5 112.2H997Z" fill="#ffffff"/><path d="M998.5 107.2H1009L1007.5 109.0H997Z" fill="#ffffff"/><path d="M1001 100.5H1012L1008 105.0H997Z" fill="#e3e3e3"/><path d="M1005 110L1012 117" stroke="#f6d26b" stroke-width="3"/><path d="M1008 107L1014 113" stroke="#fff" stroke-width="2.500"/><path d="M902.5 110.4H912L910.5 112.2H901Z" fill="#ffffff"/><path d="M902.5 107.2H912L910.5 109.0H901Z" fill="#ffffff"/><path d="M905 100.5H915L911 105.0H901Z" fill="#e3e3e3"/><circle cx="913" cy="111" r="3.3" fill="#f6d26b"/><path d="M911.185 113.31H914.815V115.95Q913 117.6 911.185 115.95Z" fill="#f7f7f7"/><path d="M926.5 110.4H936L934.5 112.2H925Z" fill="#6cbcf5"/><path d="M926.5 107.2H936L934.5 109.0H925Z" fill="#ffffff"/><path d="M929 100.5H939L935 105.0H925Z" fill="#e3e3e3"/><path d="M935 118L941 111.500M941 111.500H937.500M941 111.500V115" stroke="#e3e3e3" stroke-width="1.200" fill="none"/><path d="M950.5 110.4H960L958.5 112.2H949Z" fill="#ffffff"/><path d="M950.5 107.2H960L958.5 109.0H949Z" fill="#ffffff"/><path d="M953 100.5H963L959 105.0H949Z" fill="#e3e3e3"/><circle cx="961" cy="112.5" r="2.6" fill="#f6d26b"/><path d="M964.9 112.5L966.8 112.5" stroke="#f6d26b" stroke-width="1.200"/><path d="M963.8 115.3L965.1 116.6" stroke="#f6d26b" stroke-width="1.200"/><path d="M961.0 116.4L961.0 118.3" stroke="#f6d26b" stroke-width="1.200"/><path d="M958.2 115.3L956.9 116.6" stroke="#f6d26b" stroke-width="1.200"/><path d="M957.1 112.5L955.2 112.5" stroke="#f6d26b" stroke-width="1.200"/><path d="M958.2 109.7L956.9 108.4" stroke="#f6d26b" stroke-width="1.200"/><path d="M961.0 108.6L961.0 106.7" stroke="#f6d26b" stroke-width="1.200"/><path d="M963.8 109.7L965.1 108.4" stroke="#f6d26b" stroke-width="1.200"/><path d="M978 101.500H988L984 106.500H973.500Z" fill="#e3e3e3"/><rect x="981" y="113" width="8" height="5.8" fill="#f6d26b"/><rect x="984.3" y="115" width="1.400" height="2.500" fill="#6b5a1e"/><path d="M985.4 113V110.5Q988.1 106.5 990.8 110.5V112" stroke="#f6d26b" stroke-width="1.800" fill="none"/><path d="M986 84V93H989V86Q987.500 83 986 84Z" fill="#48c7c7"/><path d="M1128 50H1139.500L1145 55.500V74H1128Z" fill="#6cbcf5"/><path d="M1139.500 50V55.500H1145Z" fill="#d8eefc"/><rect x="1114.500" y="60.500" width="21" height="14" fill="#6c727d" stroke="#f0f0f0" stroke-width="1.200"/><circle cx="1134.500" cy="75" r="6.500" fill="#6c727d" fill-opacity=".85" stroke="#f0f0f0" stroke-width="1.200"/><rect x="1113" y="73" width="3" height="3" fill="#fff"/><rect x="1154.5" y="58.0" width="10" height="7" fill="#6c727d" stroke="#f0f0f0" stroke-width="1.100"/><circle cx="1164.5" cy="65.5" r="3" fill="#6c727d" stroke="#f0f0f0" stroke-width="1.100"/><rect x="1153" y="64.0" width="2.400" height="2.400" fill="#fff"/><path d="M1164.500 52L1165.300 55.200L1168.500 56L1165.300 56.800L1164.500 60L1163.700 56.800L1160.500 56L1163.700 55.200Z" fill="#f6d26b" transform="rotate(0 1164.500 56)"/><path d="M1164.500 52L1165.300 55.200L1168.500 56L1165.300 56.800L1164.500 60L1163.700 56.800L1160.500 56L1163.700 55.200Z" fill="#f6d26b" transform="rotate(45 1164.500 56)"/><rect x="1154.5" y="82.0" width="10" height="7" fill="#6c727d" stroke="#f0f0f0" stroke-width="1.100"/><circle cx="1164.5" cy="89.5" r="3" fill="#6c727d" stroke="#f0f0f0" stroke-width="1.100"/><rect x="1153" y="88.0" width="2.400" height="2.400" fill="#fff"/><path d="M1160.5 86.0L1164.5 84.9L1161.6 82.0Z" fill="#dcdcdc"/><path d="M1164.5 84.9L1167.7 81.7L1164.8 78.8L1161.6 82.0Z" fill="#f6d26b"/><path d="M1167.7 81.7L1169.9 79.4L1167.1 76.6L1164.8 78.8Z" fill="#e9635a"/><path d="M1153.500 102.500H1160L1167 109L1160.500 116L1153.500 109Z" fill="none" stroke="#fff" stroke-width="1.800"/><path d="M1153.500 102.500H1159L1157 108H1153.500Z" fill="#fff"/><rect x="1155.500" y="104.500" width="1.600" height="1.600" fill="#333"/><path d="M1160.0 110.0L1164.0 109.0L1161.3 106.1Z" fill="#dcdcdc"/><path d="M1164.0 109.0L1167.5 105.6L1164.8 102.7L1161.3 106.1Z" fill="#f6d26b"/><path d="M1167.5 105.6L1169.9 103.5L1167.1 100.5L1164.8 102.7Z" fill="#e9635a"/><path d="M1329.500 53V83 M1361.500 53V83" stroke="#e3e3e3" stroke-width="1.200"/><path d="M1331 59H1360" stroke="#e3e3e3" stroke-width="1.100"/><path d="M1330 59L1334 57V61Z M1361 59L1357 57V61Z" fill="#e3e3e3"/><g fill="#f6d26b"><path d="M1344.500 67.500H1346.500L1346.800 73.500H1344.200Z"/><path d="M1336 71L1338 70L1341 75L1339 76Z"/><path d="M1355 71L1353 70L1350 75L1352 76Z"/><path d="M1333 77.500L1338 78.500L1337.500 80.500L1332.500 79.500Z"/><path d="M1358 77.500L1353 78.500L1353.500 80.500L1358.500 79.500Z"/></g><path d="M1382.500 54V68 M1397.500 54V68" stroke="#e3e3e3" stroke-width="1"/><path d="M1383 60.500H1396.500" stroke="#6cbcf5" stroke-width="1.200"/><path d="M1382.500 60.500L1385.500 59V62Z M1397 60.500L1394 59V62Z" fill="#6cbcf5"/><circle cx="1395" cy="81" r="2.800" fill="none" stroke="#e3e3e3" stroke-width="1.100"/><path d="M1392.500 82.500Q1387 82 1383.500 90" stroke="#e3e3e3" stroke-width="1.100" fill="none"/><path d="M1381.500 92L1382 87.500L1385.500 89.500Z" fill="#e3e3e3"/><rect x="1382.500" y="102.500" width="15" height="13" fill="none" stroke="#e3e3e3" stroke-width="1.300"/><path d="M1382.500 106H1397.500 M1382.500 109.300H1397.500 M1382.500 112.500H1397.500 M1387.500 106V115.500 M1392.500 106V115.500" stroke="#e3e3e3" stroke-width="1"/><rect x="1475" y="51.500" width="19.500" height="27" fill="#e3e3e3"/><rect x="1478" y="54.500" width="13.500" height="10" fill="#6cbcf5" stroke="#777" stroke-width=".8"/><path d="M1478 69.500H1483 M1478 74.500H1483 M1487 72H1491 M1485 67V72 M1480.500 67.500V71" stroke="#666" stroke-width="1"/><path d="M1489 74L1496 82L1500.500 77.500L1493.500 70Z" fill="#f6d26b"/><path d="M1496 68.500L1502 74.500" stroke="#fff" stroke-width="3"/><path d="M1499 66L1505.500 72.500" stroke="#fff" stroke-width="2" opacity="0"/><path d="M1500.500 65.500L1504.500 69.500" stroke="#fff" stroke-width="3.500"/><path d="M1529.500 60L1529.50 51.70A8.300 8.300 0 0 1 1535.49 54.25Z" fill="#f4d03f"/><path d="M1529.500 60L1535.37 54.13A8.300 8.300 0 0 1 1537.80 60.17Z" fill="#f39c12"/><path d="M1529.500 60L1537.80 60.00A8.300 8.300 0 0 1 1535.25 65.99Z" fill="#e74c3c"/><path d="M1529.500 60L1535.37 65.87A8.300 8.300 0 0 1 1529.33 68.30Z" fill="#9b59b6"/><path d="M1529.500 60L1529.50 68.30A8.300 8.300 0 0 1 1523.51 65.75Z" fill="#3b7ddd"/><path d="M1529.500 60L1523.63 65.87A8.300 8.300 0 0 1 1521.20 59.83Z" fill="#2eb8e6"/><path d="M1529.500 60L1521.20 60.00A8.300 8.300 0 0 1 1523.75 54.01Z" fill="#27ae60"/><path d="M1529.500 60L1523.63 54.13A8.300 8.300 0 0 1 1529.67 51.70Z" fill="#8bd346"/><path d="M1521.500 77H1538" stroke="#e3e3e3" stroke-width="1.500"/><path d="M1521.500 81.500H1538" stroke="#e3e3e3" stroke-width="2.500"/><path d="M1521.500 86.500H1538" stroke="#e3e3e3" stroke-width="3"/><path d="M1521.500 91.500H1538" stroke="#e3e3e3" stroke-width="3.500"/><path d="M1521.500 101.500H1538" stroke="#e3e3e3" stroke-width="1" stroke-dasharray="1 1"/><path d="M1521.500 104.500H1538" stroke="#e3e3e3" stroke-width="1.200" stroke-dasharray="2 1"/><path d="M1521.500 108H1538" stroke="#e3e3e3" stroke-width="1.200" stroke-dasharray="3 1"/><path d="M1521.500 111.500H1538" stroke="#e3e3e3" stroke-width="1.200" stroke-dasharray="4 1 1 1"/><path d="M1521.500 114.500H1538" stroke="#e3e3e3" stroke-width="1.200" stroke-dasharray="2 1"/><rect x="1745" y="65" width="28" height="6.500" fill="#f6d26b"/><rect x="1747.5" y="65" width="1.200" height="3.5" fill="#3b4453"/><rect x="1751.0" y="65" width="1.200" height="2.2" fill="#3b4453"/><rect x="1754.5" y="65" width="1.200" height="3.5" fill="#3b4453"/><rect x="1758.0" y="65" width="1.200" height="2.2" fill="#3b4453"/><rect x="1761.5" y="65" width="1.200" height="3.5" fill="#3b4453"/><rect x="1765.0" y="65" width="1.200" height="2.2" fill="#3b4453"/><rect x="1768.5" y="65" width="1.200" height="3.5" fill="#3b4453"/><rect x="1772.0" y="65" width="1.200" height="2.2" fill="#3b4453"/><path d="M1797 55V67L1800 64.500L1802 68.500L1803.500 67.700L1801.700 64H1805Z" fill="#fff"/><path d="M1806 50.500L1802.500 55H1805.500L1803.500 58.500L1809 54H1806L1808 50.500Z" fill="#f6d26b"/><rect x="1804" y="58" width="10" height="10" fill="#f3f3f3"/><g fill="#3c8df0"><rect x="1805.500" y="60" width="1.500" height="1.400"/><rect x="1808" y="60" width="4.500" height="1.400"/><rect x="1805.500" y="62.500" width="1.500" height="1.400"/><rect x="1808" y="62.500" width="4.500" height="1.400"/><rect x="1805.500" y="65" width="1.500" height="1.400"/><rect x="1808" y="65" width="4.500" height="1.400"/></g><rect x="1797" y="77.500" width="14.500" height="14.500" fill="none" stroke="#3ecf74" stroke-width="1.200" stroke-dasharray="1.500 1"/><path d="M1799 83H1806V90H1799Z M1802 80H1809V87H1802Z" fill="none" stroke="#3ecf74" stroke-width="2"/><path d="M1806.500 83V93L1809 91L1810.500 94.500L1812 93.800L1810.500 90.500H1813.500Z" fill="#fff"/><rect x="1798.500" y="101" width="12.500" height="16" fill="#e3e3e3"/><rect x="1800.500" y="103" width="8.500" height="3" fill="#777"/><rect x="1800.5" y="107.5" width="2" height="2" fill="#666"/><rect x="1803.7" y="107.5" width="2" height="2" fill="#666"/><rect x="1806.9" y="107.5" width="2" height="2" fill="#666"/><rect x="1800.5" y="110.5" width="2" height="2" fill="#666"/><rect x="1803.7" y="110.5" width="2" height="2" fill="#666"/><rect x="1806.9" y="110.5" width="2" height="2" fill="#666"/><rect x="1800.5" y="113.5" width="2" height="2" fill="#666"/><rect x="1803.7" y="113.5" width="2" height="2" fill="#666"/><rect x="1806.9" y="113.5" width="2" height="2" fill="#666"/></svg>
<span class="t" style="left:1279px;top:58.5px;height:20px;line-height:20px;font-size:39px;color:#e3e3e3;-webkit-text-stroke:0.6px #e3e3e3;">A</span>
<div style="left:798px;top:74px;width:188px;height:21px;background:#242933;"></div>
<span class="t" style="left:807px;top:75px;height:20px;line-height:20px;font-size:12px;color:#e6e9ee;letter-spacing:-0.116px;">01.dwg</span>
<div style="left:0px;top:172px;width:302px;height:879px;background:#3b4453;"></div>
<div style="left:0px;top:175px;width:278px;height:20px;background:#2e3541;"></div>
<svg style="left:6px;top:181px;" width="4" height="10" viewBox="0 0 4 10"><rect x="0" y="0" width="1" height="1" fill="#c5cad2"/><rect x="2" y="0" width="1" height="1" fill="#c5cad2"/><rect x="0" y="2" width="1" height="1" fill="#c5cad2"/><rect x="2" y="2" width="1" height="1" fill="#c5cad2"/><rect x="0" y="4" width="1" height="1" fill="#c5cad2"/><rect x="2" y="4" width="1" height="1" fill="#c5cad2"/><rect x="0" y="6" width="1" height="1" fill="#c5cad2"/><rect x="2" y="6" width="1" height="1" fill="#c5cad2"/><rect x="0" y="8" width="1" height="1" fill="#c5cad2"/><rect x="2" y="8" width="1" height="1" fill="#c5cad2"/></svg>
<span class="t" style="left:15px;top:174px;height:20px;line-height:20px;font-size:12px;color:#ffffff;letter-spacing:-0.786px;">PROJECT MANAGER</span>
<span class="t" style="left:7px;top:191.5px;height:20px;line-height:20px;font-size:12px;color:#e6e9ee;letter-spacing:-0.439px;">Current Project:</span>
<div style="left:7px;top:212px;width:190px;height:23px;box-sizing:border-box;border:1px solid #e9ecf0;background:#2e3541;"></div>
<div style="left:178px;top:213px;width:18px;height:21px;background:#ffffff;"></div>
<svg style="left:183px;top:221px;" width="9" height="5" viewBox="0 0 9 5"><path d="M0.5 0.5L4.5 4.5L8.5 0.5" stroke="#333" stroke-width="1.2" fill="none"/></svg>
<span class="t" style="left:27px;top:213.5px;height:20px;line-height:20px;font-size:12px;color:#e6e9ee;letter-spacing:-0.716px;">Class 1</span>
<svg style="left:211px;top:213px;" width="21" height="20" viewBox="0 0 21 20"><path d="M4 0H17V6H4Z" fill="#e3e5e8"/><rect x="0" y="5" width="21" height="10" rx="1.5" fill="#e3e5e8"/><path d="M4 11H17V20H4Z" fill="#e3e5e8"/><rect x="6" y="14" width="9" height="4" fill="#3fa9f5"/></svg>
<svg style="left:236px;top:213px;" width="18" height="20" viewBox="0 0 18 20"><path d="M0 0H9L12 3V14H0Z" fill="#c9cdd3"/><path d="M5 4H14L18 8V20H5Z" fill="#e3e5e8"/><path d="M8 10H15M8 13H15M8 16H15" stroke="#7a808a" stroke-width="1.2"/></svg>
<svg style="left:257px;top:222px;" width="5" height="3" viewBox="0 0 5 3"><path d="M0 0H5L2.5 3Z" fill="#111"/></svg>
<div style="left:211px;top:213px;width:57px;height:23px;box-sizing:border-box;border:1px solid #cfd4db;border-top:none;border-left:none;border-radius:0 0 3px 0;"></div>
<div style="left:8px;top:246px;width:261px;height:17px;background:#2e3541;"></div>
<span class="t" style="left:16px;top:244px;height:20px;line-height:20px;font-size:12px;color:#ffffff;letter-spacing:0.045px;font-weight:bold;">Project</span>
<svg style="left:185px;top:248px;" width="14" height="14" viewBox="0 0 14 14"><circle cx="5.5" cy="5.5" r="4.5" fill="#5a6272" stroke="#d5d9df" stroke-width="1.3"/><path d="M9 9L13 13" stroke="#d9b776" stroke-width="1.8"/></svg>
<svg style="left:202px;top:248px;" width="14" height="14" viewBox="0 0 14 14"><path d="M0 4H7L10 7V14H0Z" fill="#e3e5e8"/><circle cx="10" cy="3.5" r="2.6" fill="#f3d169"/><path d="M7 8L10 11L12 7" stroke="#555" fill="none"/></svg>
<svg style="left:219px;top:248px;" width="14" height="14" viewBox="0 0 14 14"><path d="M0 0H5V9H0Z M3 3H9V11H3Z" fill="#c9cdd3"/><path d="M7 6H11L13 8V14H7Z" fill="#eef0f3"/></svg>
<svg style="left:236px;top:248px;" width="14" height="14" viewBox="0 0 14 14"><path d="M1.5 6A5.5 5.5 0 0 1 11.5 3.5" stroke="#39c46d" stroke-width="2.2" fill="none"/><path d="M12.5 8A5.5 5.5 0 0 1 2.5 10.5" stroke="#39c46d" stroke-width="2.2" fill="none"/><path d="M13.5 1V6H8.5Z M0.5 13V8H5.5Z" fill="#39c46d"/></svg>
<svg style="left:258px;top:254px;" width="4" height="3" viewBox="0 0 4 3"><path d="M0 3H4L2 0Z" fill="#e3e5e8"/></svg>
<div style="left:7px;top:263px;width:263px;height:377px;box-sizing:border-box;border:1px solid #dfe3e8;"></div>
<div style="left:13px;top:272px;width:251px;height:20px;background:#4b576c;"></div>
<span class="t" style="left:120px;top:269px;height:20px;line-height:20px;font-size:12px;color:#d3d8e0;letter-spacing:-0.504px;">Search</span>
<svg style="left:246px;top:272px;" width="16" height="17" viewBox="0 0 16 17"><circle cx="6.5" cy="6.5" r="5.5" fill="#5a6272" stroke="#e3e5e8" stroke-width="1.3"/><path d="M10.5 10.5L15 15" stroke="#d9b776" stroke-width="1.6"/></svg>
<svg style="left:38px;top:317px;" width="1" height="119" viewBox="0 0 1 119"><path d="M0.5 0V119" stroke="#aab1bc" stroke-width="1" stroke-dasharray="1 1"/></svg>
<svg style="left:57px;top:335px;" width="1" height="7" viewBox="0 0 1 7"><path d="M0.5 0V7" stroke="#aab1bc" stroke-width="1" stroke-dasharray="1 1"/></svg>
<svg style="left:76px;top:354px;" width="1" height="29" viewBox="0 0 1 29"><path d="M0.5 0V29" stroke="#aab1bc" stroke-width="1" stroke-dasharray="1 1"/></svg>
<svg style="left:24px;top:310px;" width="5" height="1" viewBox="0 0 5 1"><path d="M0 0.5H5" stroke="#aab1bc" stroke-width="1" stroke-dasharray="1 1"/></svg>
<svg style="left:43px;top:328.5px;" width="7" height="1" viewBox="0 0 7 1"><path d="M0 0.5H7" stroke="#aab1bc" stroke-width="1" stroke-dasharray="1 1"/></svg>
<svg style="left:62px;top:346.5px;" width="6" height="1" viewBox="0 0 6 1"><path d="M0 0.5H6" stroke="#aab1bc" stroke-width="1" stroke-dasharray="1 1"/></svg>
<svg style="left:76px;top:364px;" width="12" height="1" viewBox="0 0 12 1"><path d="M0 0.5H12" stroke="#aab1bc" stroke-width="1" stroke-dasharray="1 1"/></svg>
<svg style="left:76px;top:382.5px;" width="11" height="1" viewBox="0 0 11 1"><path d="M0 0.5H11" stroke="#aab1bc" stroke-width="1" stroke-dasharray="1 1"/></svg>
<svg style="left:43px;top:400.5px;" width="6" height="1" viewBox="0 0 6 1"><path d="M0 0.5H6" stroke="#aab1bc" stroke-width="1" stroke-dasharray="1 1"/></svg>
<svg style="left:43px;top:418px;" width="6" height="1" viewBox="0 0 6 1"><path d="M0 0.5H6" stroke="#aab1bc" stroke-width="1" stroke-dasharray="1 1"/></svg>
<svg style="left:43px;top:436.5px;" width="6" height="1" viewBox="0 0 6 1"><path d="M0 0.5H6" stroke="#aab1bc" stroke-width="1" stroke-dasharray="1 1"/></svg>
<svg style="left:15px;top:305.5px;" width="9" height="9" viewBox="0 0 9 9"><rect x="0.5" y="0.5" width="8" height="8" fill="#eceef1" stroke="#9299a3"/><path d="M2 4.5H7" stroke="#222" stroke-width="1.200"/></svg>
<svg style="left:34px;top:324.0px;" width="9" height="9" viewBox="0 0 9 9"><rect x="0.5" y="0.5" width="8" height="8" fill="#eceef1" stroke="#9299a3"/><path d="M2 4.5H7" stroke="#222" stroke-width="1.200"/></svg>
<svg style="left:53px;top:342.0px;" width="9" height="9" viewBox="0 0 9 9"><rect x="0.5" y="0.5" width="8" height="8" fill="#eceef1" stroke="#9299a3"/><path d="M2 4.5H7" stroke="#222" stroke-width="1.200"/></svg>
<svg style="left:34px;top:396.0px;" width="9" height="9" viewBox="0 0 9 9"><rect x="0.5" y="0.5" width="8" height="8" fill="#eceef1" stroke="#9299a3"/><path d="M2 4.5H7" stroke="#222" stroke-width="1.200"/><path d="M4.5 2V7" stroke="#222" stroke-width="1.200"/></svg>
<svg style="left:34px;top:413.5px;" width="9" height="9" viewBox="0 0 9 9"><rect x="0.5" y="0.5" width="8" height="8" fill="#eceef1" stroke="#9299a3"/><path d="M2 4.5H7" stroke="#222" stroke-width="1.200"/><path d="M4.5 2V7" stroke="#222" stroke-width="1.200"/></svg>
<svg style="left:34px;top:432.0px;" width="9" height="9" viewBox="0 0 9 9"><rect x="0.5" y="0.5" width="8" height="8" fill="#eceef1" stroke="#9299a3"/><path d="M2 4.5H7" stroke="#222" stroke-width="1.200"/><path d="M4.5 2V7" stroke="#222" stroke-width="1.200"/></svg>
<svg style="left:29.5px;top:302.5px;" width="17" height="14" viewBox="0 0 17 14"><path d="M0 4H8L13 13.500H0Z" fill="#e3e5e8"/><path d="M6 2Q8 -0.500 11 1.500L16 9Q17 12.500 14 13.500Q11 13.500 11 11Z" fill="#e3e5e8" stroke="#3b4453" stroke-width=".7"/><path d="M12 11.500Q11.500 9 13.500 9Q15 9.500 14.500 11" fill="none" stroke="#3b4453" stroke-width=".8"/></svg>
<svg style="left:51px;top:319px;" width="13" height="15" viewBox="0 0 13 15"><path d="M0 0H8.500L13 4.500V15H0Z" fill="#e3e5e8"/><path d="M8.500 0V4.500H13Z" fill="#fafafa" stroke="#3b4453" stroke-width=".6"/><path d="M4.500 0V15M0 6.500H13" stroke="#3b4453" stroke-width="1"/><circle cx="4.500" cy="6.500" r="1.600" fill="#e3e5e8" stroke="#3b4453" stroke-width=".8"/></svg>
<svg style="left:68px;top:339.5px;" width="17" height="11.5" viewBox="0 0 17 11.5"><path d="M0 0H12L16.500 4.500V11.500H0Z" fill="#e3e5e8"/><path d="M12 0V4.500H16.500Z" fill="#fafafa" stroke="#3b4453" stroke-width=".6"/></svg>
<svg style="left:88px;top:355px;" width="14" height="15" viewBox="0 0 14 15"><path d="M0 0H9.500L14 4.500V15H0Z" fill="#5aa9ec"/><path d="M9.500 0V4.500H14Z" fill="#f4f6f8"/><path d="M0 10Q6 8 14 12.500V15H0Z" fill="#f4d54f"/><path d="M4 0V9.500M0 5H10" stroke="#eaf3fb" stroke-width="1"/><circle cx="4" cy="5" r="1.600" fill="#fff"/></svg>
<svg style="left:87px;top:373px;" width="14" height="15" viewBox="0 0 14 15"><path d="M0 0H9.500L14 4.500V15H0Z" fill="#5aa9ec"/><path d="M9.500 0V4.500H14Z" fill="#f4f6f8"/><path d="M0 10Q6 8 14 12.500V15H0Z" fill="#f4d54f"/><path d="M4 0V9.500M0 5H10" stroke="#eaf3fb" stroke-width="1"/><circle cx="4" cy="5" r="1.600" fill="#fff"/></svg>
<svg style="left:95px;top:380px;" width="7.5" height="8.5" viewBox="0 0 7.5 8.5"><rect x="0" y="3.500" width="7.500" height="5" fill="#f0c23c"/><rect x="3.200" y="5" width="1.200" height="2" fill="#7a5c10"/><path d="M1.700 3.500V2Q3.750 -0.300 5.800 2V3.500" stroke="#f0c23c" fill="none" stroke-width="1.300"/></svg>
<svg style="left:49px;top:391.5px;" width="15" height="14.5" viewBox="0 0 15 14.5"><path d="M0 0H8.500L12 3.500V14.500H0Z" fill="#e3e5e8"/><path d="M8.500 0V3.500H12Z" fill="#fafafa" stroke="#3b4453" stroke-width=".6"/><path d="M4.500 0V14.500M0 6.500H12" stroke="#3b4453" stroke-width="1"/><path d="M6 9.500H11.500Q15 10 15 12.500Q14 14.500 11.500 14.500H6Z" fill="#e3e5e8" stroke="#3b4453" stroke-width=".7"/><circle cx="9.200" cy="12" r="1.600" fill="none" stroke="#3b4453" stroke-width=".9"/></svg>
<svg style="left:49px;top:409px;" width="15.5" height="16" viewBox="0 0 15.5 16"><path d="M0.600 0.600H11L14.900 4.500V15.400H0.600Z" fill="none" stroke="#e3e5e8" stroke-width="1.200"/><path d="M3.500 8V13.500L11 8V13.500Z M7.250 6V10.750 M5 5.500H9.500" stroke="#e3e5e8" fill="none" stroke-width="1"/></svg>
<svg style="left:49px;top:429px;" width="16" height="12" viewBox="0 0 16 12"><path d="M0 0H11.500L16 4.500V12H0Z" fill="#e3e5e8"/><path d="M11.500 0V4.500H16Z" fill="#fafafa" stroke="#3b4453" stroke-width=".6"/></svg>
<span class="t" style="left:51px;top:298px;height:20px;line-height:20px;font-size:12px;color:#e6e9ee;letter-spacing:-0.716px;">Class 1</span>
<span class="t" style="left:70px;top:316.5px;height:20px;line-height:20px;font-size:12px;color:#e6e9ee;letter-spacing:-0.104px;">P&amp;ID Drawings</span>
<span class="t" style="left:89px;top:334.5px;height:20px;line-height:20px;font-size:12px;color:#e6e9ee;letter-spacing:-0.559px;">Area 1</span>
<span class="t" style="left:108px;top:352.5px;height:20px;line-height:20px;font-size:12px;color:#e6e9ee;letter-spacing:-1.174px;">01</span>
<span class="t" style="left:70px;top:388.5px;height:20px;line-height:20px;font-size:12px;color:#e6e9ee;letter-spacing:-0.199px;">Plant 3D Drawings</span>
<span class="t" style="left:70px;top:406.5px;height:20px;line-height:20px;font-size:12px;color:#e6e9ee;letter-spacing:-0.470px;">Pipe Specs</span>
<span class="t" style="left:70px;top:424.5px;height:20px;line-height:20px;font-size:12px;color:#e6e9ee;letter-spacing:-0.387px;">Related Files</span>
<div style="left:105.5px;top:372px;width:17px;height:17.5px;background:#f7f8fa;"></div>
<span class="t" style="left:108px;top:370.5px;height:20px;line-height:20px;font-size:12px;color:#111;letter-spacing:-0.674px;">02</span>
<div style="left:8px;top:655px;width:261px;height:17px;background:#2e3541;"></div>
<span class="t" style="left:16px;top:653px;height:20px;line-height:20px;font-size:12px;color:#ffffff;letter-spacing:-0.050px;font-weight:bold;">Details</span>
<svg style="left:202px;top:657px;" width="13" height="13" viewBox="0 0 13 13"><path d="M0 0H7L10 3V9H0Z" fill="#e3e5e8"/><path d="M5 10H13V13H5Z" fill="#e3e5e8"/></svg>
<svg style="left:219px;top:657px;" width="14" height="13" viewBox="0 0 14 13"><path d="M0 2H3V0H11V2H14V9H0Z" fill="#aeb3bb"/><circle cx="9" cy="8" r="3" fill="#6d737d" stroke="#e3e5e8"/><path d="M11 10L14 13" stroke="#e3e5e8" stroke-width="1.4"/></svg>
<svg style="left:236px;top:657px;" width="14" height="13" viewBox="0 0 14 13"><path d="M0 0H8L10 2V6H0Z M0 6H6V13H0Z" fill="#e3e5e8"/><circle cx="10" cy="9.5" r="3.5" fill="#e3e5e8" stroke="#3b4453" stroke-width=".8"/><path d="M10 7.5V9.5H12" stroke="#333" fill="none" stroke-width=".9"/></svg>
<svg style="left:258px;top:663px;" width="4" height="3" viewBox="0 0 4 3"><path d="M0 3H4L2 0Z" fill="#e3e5e8"/></svg>
<div style="left:7px;top:673px;width:263px;height:359px;box-sizing:border-box;border:1px solid #dfe3e8;"></div>
<span class="t" style="left:15px;top:677.5px;height:20px;line-height:20px;font-size:12px;color:#e6e9ee;letter-spacing:0.007px;">Status: File is read-only.</span>
<span class="t" style="left:15px;top:693.5px;height:20px;line-height:20px;font-size:12px;color:#e6e9ee;letter-spacing:0.052px;">Name: 02.dwg</span>
<span class="t" style="left:15px;top:709.5px;height:20px;line-height:20px;font-size:12px;color:#e6e9ee;letter-spacing:-0.017px;">File location: C:\Users\ianma\Documents\Class</span>
<span class="t" style="left:15px;top:725.5px;height:20px;line-height:20px;font-size:12px;color:#e6e9ee;letter-spacing:-0.233px;">DocFile_RevisonName:  Unknown</span>
<span class="t" style="left:15px;top:741.5px;height:20px;line-height:20px;font-size:12px;color:#e6e9ee;letter-spacing:0.141px;">Number:</span>
<span class="t" style="left:15px;top:757.5px;height:20px;line-height:20px;font-size:12px;color:#e6e9ee;letter-spacing:0.030px;">File is locked by user &#x27;ianma&#x27; on machine &#x27;NEW</span>
<span class="t" style="left:15px;top:773.5px;height:20px;line-height:20px;font-size:12px;color:#e6e9ee;letter-spacing:-0.175px;">File size: 439.61KB (450,162 bytes)</span>
<span class="t" style="left:15px;top:789.5px;height:20px;line-height:20px;font-size:12px;color:#e6e9ee;letter-spacing:-0.019px;">File creator: ianma</span>
<span class="t" style="left:15px;top:805.5px;height:20px;line-height:20px;font-size:12px;color:#e6e9ee;letter-spacing:-0.110px;">Last saved: Thursday, February 7, 2019 5:49:49</span>
<span class="t" style="left:15px;top:821.5px;height:20px;line-height:20px;font-size:12px;color:#e6e9ee;letter-spacing:0.044px;">Last edited by: ianma</span>
<span class="t" style="left:15px;top:837.5px;height:20px;line-height:20px;font-size:12px;color:#e6e9ee;letter-spacing:-0.030px;">Description:</span>
<div style="left:8px;top:1014px;width:261px;height:17px;background:#f0f0f0;"></div>
<div style="left:25px;top:1015px;width:155px;height:16px;background:#cdcdcd;"></div>
<svg style="left:12px;top:1019px;" width="6" height="9" viewBox="0 0 6 9"><path d="M5 0.5L1 4.5L5 8.5" stroke="#333" stroke-width="1.5" fill="none"/></svg>
<svg style="left:257px;top:1019px;" width="6" height="9" viewBox="0 0 6 9"><path d="M1 0.5L5 4.5L1 8.5" stroke="#333" stroke-width="1.5" fill="none"/></svg>
<div style="left:278px;top:172px;width:24px;height:879px;background:#3b4453;"></div>
<div style="left:280px;top:198px;width:19px;height:117px;box-sizing:border-box;background:#3b4453;border:1px solid #2c333f;border-left:none;border-radius:0 4px 4px 0;"></div>
<div style="left:280px;top:318px;width:19px;height:120px;box-sizing:border-box;background:#2e3541;border:1px solid #2a303b;border-left:none;border-radius:0 4px 4px 0;"></div>
<div style="left:280px;top:440px;width:19px;height:121px;box-sizing:border-box;background:#2e3541;border:1px solid #2a303b;border-left:none;border-radius:0 4px 4px 0;"></div>
<span class="t" style="left:289px;top:288px;height:20px;line-height:20px;font-size:12px;color:#e6e9ee;letter-spacing:-0.474px;transform-origin:0 0;transform:rotate(-90deg) translateY(-10px);">Source Files</span>
<span class="t" style="left:289px;top:428px;height:20px;line-height:20px;font-size:12px;color:#e6e9ee;letter-spacing:-0.127px;transform-origin:0 0;transform:rotate(-90deg) translateY(-10px);">Orthographic DWG</span>
<span class="t" style="left:289px;top:538px;height:20px;line-height:20px;font-size:12px;color:#e6e9ee;letter-spacing:-0.333px;transform-origin:0 0;transform:rotate(-90deg) translateY(-10px);">Isometric DWG</span>
<div style="left:302px;top:173px;width:1389px;height:878px;background:#ffffff;"></div>
<svg style="left:314px;top:173px;" width="2" height="878" viewBox="0 0 2 878"><path d="M1 0V878" stroke="#2a2a2a" stroke-width="1.500" stroke-dasharray="5 1"/></svg>
<div style="left:472.5px;top:173px;width:1.5px;height:878px;background:#3a3a3a;"></div>
<div style="left:570px;top:173px;width:4px;height:878px;background:#ffff00;"></div>
<svg style="left:630px;top:173px;" width="1" height="878" viewBox="0 0 1 878"><path d="M0.5 0V878" stroke="#fbe2ae" stroke-width="1.2" stroke-dasharray="39 20.050" stroke-dashoffset="24"/></svg>
<span class="t" style="left:576px;top:177px;height:20px;line-height:20px;font-size:12px;color:#1f1f1f;letter-spacing:0.165px;">[+][Top][2D Wireframe]</span>
<svg style="left:1628px;top:184px;" width="13" height="9" viewBox="0 0 13 9"><rect x="0.5" y="3.5" width="12" height="4" rx="1" fill="#d9d9d9" stroke="#555"/></svg>
<svg style="left:1648px;top:181px;" width="13" height="13" viewBox="0 0 13 13"><rect x="3.5" y="0.5" width="9" height="9" fill="#fff" stroke="#444"/><rect x="0.5" y="3.5" width="9" height="9" fill="#fff" stroke="#444"/><rect x="2.5" y="5.5" width="5" height="5" fill="none" stroke="#444"/></svg>
<svg style="left:1667px;top:182px;" width="13" height="12" viewBox="0 0 13 12"><path d="M1 1H4L6.5 4L9 1H12L8.5 6L12 11H9L6.5 8L4 11H1L4.5 6Z" fill="#fff" stroke="#333" stroke-width="1"/></svg>
<svg style="left:1548px;top:219px;" width="120" height="120" viewBox="0 0 120 120"><circle cx="60" cy="60" r="56" fill="none" stroke="#fbfbfb" stroke-width="10"/></svg>
<div style="left:1582px;top:253px;width:52px;height:52px;box-sizing:border-box;background:#f1f1f2;border:1px solid #8e8e8e;"></div>
<div style="left:1592px;top:263px;width:32px;height:32px;background:#e6e6e8;"></div>
<span class="t" style="left:1597px;top:269px;height:20px;line-height:20px;font-size:12px;color:#7b828c;letter-spacing:-0.817px;font-weight:bold;">TOP</span>
<span class="t" style="left:1600px;top:213.5px;height:20px;line-height:20px;font-size:22px;color:#e6e9ee;font-weight:bold;color:#e9e9e9;-webkit-text-stroke:1px #a9a9a9;">N</span>
<span class="t" style="left:1600.7px;top:326.5px;height:20px;line-height:20px;font-size:22px;color:#e6e9ee;font-weight:bold;color:#e9e9e9;-webkit-text-stroke:1px #a9a9a9;">S</span>
<span class="t" style="left:1541.6px;top:270px;height:20px;line-height:20px;font-size:22px;color:#e6e9ee;font-weight:bold;color:#e9e9e9;-webkit-text-stroke:1px #a9a9a9;">W</span>
<span class="t" style="left:1657.3px;top:270px;height:20px;line-height:20px;font-size:22px;color:#e6e9ee;font-weight:bold;color:#e9e9e9;-webkit-text-stroke:1px #a9a9a9;">E</span>
<div style="left:1584px;top:366px;width:47px;height:16px;background:#eeeef4;border-radius:3px;"></div>
<span class="t" style="left:1588px;top:364px;height:20px;line-height:20px;font-size:11px;color:#9a9aa2;letter-spacing:-0.554px;">WCS</span>
<svg style="left:1616px;top:371px;" width="8" height="6" viewBox="0 0 8 6"><path d="M0.5 0.5H7.5L4 5.5Z" fill="none" stroke="#b5b5bd"/></svg>
<svg style="left:0;top:0" width="1920" height="1080" viewBox="0 0 1920 1080"><g fill="none" stroke="#9db7f3" stroke-width="5" opacity=".75"><path d="M729 581H1231L1263 612L1231 643.5H729Z M903 581V643.5 M1231 581V643.5"/></g><g fill="none" stroke="#12318f" stroke-width="1.700"><path d="M729 581H1231L1263 612L1231 643.5H729Z M903 581V643.5 M1231 581V643.5"/></g><path d="M1231 581L1263 612L1231 643.500Z" fill="#7ea6f0"/><path d="M1234.2 584.1V640.4 M1237.4 587.2V637.3 M1240.6 590.3V634.2 M1243.8 593.4V631.1 M1247.0 596.5V628.0 M1250.2 599.6V624.9 M1253.4 602.7V621.8 M1256.6 605.8V618.7 M1259.8 608.9V615.6 " stroke="#12318f" stroke-width="1.500" fill="none"/><path d="M1231 581L1263 612L1231 643.500Z" fill="none" stroke="#12318f" stroke-width="1.700"/><path d="M1263 612.500H1293 M1615 612.500H1691" stroke="#1c1c9e" stroke-width="1"/><circle cx="736.8" cy="568.8" r="3.6" fill="#a9c0f5"/><path d="M734.4 568.8L736.8 566.4L739.1999999999999 568.8L736.8 571.1999999999999Z" fill="#14256e"/><circle cx="816" cy="626.8" r="3.6" fill="#a9c0f5"/><path d="M813.6 626.8L816 624.4L818.4 626.8L816 629.1999999999999Z" fill="#14256e"/><circle cx="1069" cy="626.8" r="3.6" fill="#a9c0f5"/><path d="M1066.6 626.8L1069 624.4L1071.4 626.8L1069 629.1999999999999Z" fill="#14256e"/><circle cx="736.8" cy="682.3" r="3.6" fill="#a9c0f5"/><path d="M734.4 682.3L736.8 679.9L739.1999999999999 682.3L736.8 684.6999999999999Z" fill="#14256e"/><g fill="none" stroke="#1c1c1c" stroke-width="1.3"><path d="M729 877.5H1231L1263 909L1231 940.5H729Z M903 877.5V940.5 M1231 877.5V940.5"/></g><path d="M1234.2 880.7V937.3 M1237.4 883.8V934.2 M1240.6 886.9V931.1 M1243.8 890.1V927.9 M1247.0 893.2V924.8 M1250.2 896.4V921.6 M1253.4 899.6V918.4 M1256.6 902.7V915.3 M1259.8 905.8V912.2 " stroke="#1c1c1c" stroke-width="1.1" fill="none"/><path d="M1263 909H1385 M1441 909V1051" stroke="#3f3fe0" stroke-width="2" fill="none"/><path d="M1381 894V924L1441 909Z" fill="#000"/><path d="M734.9000000000001 865.6L736.7 863.8000000000001L738.5 865.6L736.7 867.4Z" fill="#fff" stroke="#222" stroke-width=".9"/><path d="M814.2 923.6L816 921.8000000000001L817.8 923.6L816 925.4Z" fill="#fff" stroke="#222" stroke-width=".9"/><path d="M1067.2 923.6L1069 921.8000000000001L1070.8 923.6L1069 925.4Z" fill="#fff" stroke="#222" stroke-width=".9"/><path d="M734.9000000000001 978.6L736.7 976.8000000000001L738.5 978.6L736.7 980.4Z" fill="#fff" stroke="#222" stroke-width=".9"/></svg>
<svg style="left:671.5px;top:586.5px;" width="52" height="52" viewBox="0 0 52 52"><circle cx="26" cy="26" r="23" fill="#fff" stroke="#ee1c25" stroke-width="4.800"/><path d="M8.800 17.300L17.500 10.300V13.500H29V21.500H17.500V24.500Z" fill="#1f1f1f"/><path d="M43.300 34.700L34.800 27.500V30.800H23.500V38.800H34.800V42Z" fill="#1f1f1f"/><path d="M41.800 10.200L10.200 41.800" stroke="#ee1c25" stroke-width="5.600"/></svg>
<svg style="left:671.5px;top:883.0px;" width="52" height="52" viewBox="0 0 52 52"><circle cx="26" cy="26" r="23" fill="#fff" stroke="#ee1c25" stroke-width="4.800"/><path d="M8.800 17.300L17.500 10.300V13.500H29V21.500H17.500V24.500Z" fill="#1f1f1f"/><path d="M43.300 34.700L34.800 27.500V30.800H23.500V38.800H34.800V42Z" fill="#1f1f1f"/><path d="M41.800 10.200L10.200 41.800" stroke="#ee1c25" stroke-width="5.600"/></svg>
<div style="left:642px;top:966.5px;width:59px;height:14px;background:#f0f0f0;border-radius:2px;"></div>
<span class="t" style="left:643px;top:963px;height:20px;line-height:20px;font-size:11px;color:#fcfcfc;letter-spacing:0.399px;font-family:'Liberation Mono',monospace;">Command:</span>
<div style="left:642px;top:987.5px;width:59px;height:14px;background:#f0f0f0;border-radius:2px;"></div>
<span class="t" style="left:643px;top:984px;height:20px;line-height:20px;font-size:11px;color:#fcfcfc;letter-spacing:0.399px;font-family:'Liberation Mono',monospace;">Command:</span>
<div style="left:642px;top:1006.5px;width:255px;height:14px;background:#f0f0f0;border-radius:2px;"></div>
<span class="t" style="left:643px;top:1003px;height:20px;line-height:20px;font-size:11px;color:#fcfcfc;letter-spacing:0.399px;font-family:'Liberation Mono',monospace;">Enter new value for CURSORBADGE &lt;1&gt;:</span>
<div style="left:580px;top:1025px;width:57px;height:25px;background:#70747b;"></div>
<div style="left:636px;top:1024px;width:777px;height:26px;box-sizing:border-box;background:#fff;border:1px solid #8d9096;border-radius:0 2px 2px 0;"></div>
<svg style="left:584px;top:1029px;" width="6" height="17" viewBox="0 0 6 17"><rect x="0" y="0.0" width="1.6" height="1.6" fill="#d4d6da"/><rect x="3" y="0.0" width="1.6" height="1.6" fill="#d4d6da"/><rect x="0" y="2.5" width="1.6" height="1.6" fill="#d4d6da"/><rect x="3" y="2.5" width="1.6" height="1.6" fill="#d4d6da"/><rect x="0" y="5.0" width="1.6" height="1.6" fill="#d4d6da"/><rect x="3" y="5.0" width="1.6" height="1.6" fill="#d4d6da"/><rect x="0" y="7.5" width="1.6" height="1.6" fill="#d4d6da"/><rect x="3" y="7.5" width="1.6" height="1.6" fill="#d4d6da"/><rect x="0" y="10.0" width="1.6" height="1.6" fill="#d4d6da"/><rect x="3" y="10.0" width="1.6" height="1.6" fill="#d4d6da"/><rect x="0" y="12.5" width="1.6" height="1.6" fill="#d4d6da"/><rect x="3" y="12.5" width="1.6" height="1.6" fill="#d4d6da"/><rect x="0" y="15.0" width="1.6" height="1.6" fill="#d4d6da"/><rect x="3" y="15.0" width="1.6" height="1.6" fill="#d4d6da"/></svg>
<svg style="left:595px;top:1032px;" width="9" height="9" viewBox="0 0 9 9"><path d="M1 1L8 8M8 1L1 8" stroke="#f0f0f0" stroke-width="1.8"/></svg>
<svg style="left:614px;top:1030px;" width="14" height="14" viewBox="0 0 14 14"><path d="M1.5 12.500L8 6" stroke="#f0f0f0" stroke-width="2.6" stroke-linecap="round"/><path d="M7 4A3.600 3.600 0 0 1 12 1L9.500 3.500L10.500 4.500L13 2A3.600 3.600 0 0 1 9 7Z" fill="#f0f0f0"/></svg>
<svg style="left:640px;top:1031px;" width="14" height="12" viewBox="0 0 14 12"><rect x="0.5" y="0.5" width="13" height="11" rx="1" fill="#f2f2f2" stroke="#777"/><path d="M2.5 3.500L5 5.500L2.500 7.500 M6 8.500H10" stroke="#555" fill="none"/></svg>
<svg style="left:657px;top:1036px;" width="6" height="4" viewBox="0 0 6 4"><path d="M0 0H6L3 4Z" fill="#777"/></svg>
<span class="t" style="left:672px;top:1027px;height:20px;line-height:20px;font-size:12px;color:#8a8a8a;letter-spacing:-0.201px;font-style:italic;font-family:'Liberation Mono',monospace;">Type a command</span>
<svg style="left:1402px;top:1035px;" width="7" height="4" viewBox="0 0 7 4"><path d="M0 4H7L3.500 0Z" fill="#8a8a8a"/></svg>
<svg style="left:588px;top:960px;" width="80" height="78" viewBox="0 0 80 78"><path d="M6.500 19V65 M11 69H56" stroke="#222" stroke-width="1" fill="none"/><rect x="2.500" y="64.500" width="8.500" height="8.500" fill="none" stroke="#222"/><path d="M8 2.500L14.500 9.500L21 2.500 M14.500 9.500V14.500" stroke="#222" stroke-width="1.100" fill="none"/><path d="M61 55.500L74 67M74 55.500L61 67" stroke="#222" stroke-width="1.100"/></svg>
<div style="left:1691px;top:172px;width:229px;height:879px;background:#3b4453;"></div>
<div style="left:1714px;top:175px;width:206px;height:20px;background:#2e3541;"></div>
<svg style="left:1720px;top:181px;" width="4" height="10" viewBox="0 0 4 10"><rect x="0" y="0" width="1" height="1" fill="#c5cad2"/><rect x="2" y="0" width="1" height="1" fill="#c5cad2"/><rect x="0" y="2" width="1" height="1" fill="#c5cad2"/><rect x="2" y="2" width="1" height="1" fill="#c5cad2"/><rect x="0" y="4" width="1" height="1" fill="#c5cad2"/><rect x="2" y="4" width="1" height="1" fill="#c5cad2"/><rect x="0" y="6" width="1" height="1" fill="#c5cad2"/><rect x="2" y="6" width="1" height="1" fill="#c5cad2"/><rect x="0" y="8" width="1" height="1" fill="#c5cad2"/><rect x="2" y="8" width="1" height="1" fill="#c5cad2"/></svg>
<span class="t" style="left:1729px;top:173.5px;height:20px;line-height:20px;font-size:12px;color:#ffffff;letter-spacing:-0.590px;">TOOL PALETTES - P&amp;ID PIP</span>
<div style="left:1911px;top:201px;width:6px;height:745px;background:#2b323d;border-radius:3px;"></div>
<div style="left:1694px;top:198px;width:20px;height:118px;box-sizing:border-box;background:#2e3541;border:1px solid #2a303b;border-right:none;border-radius:4px 0 0 4px;"></div>
<span class="t" style="left:1706px;top:311px;height:20px;line-height:20px;font-size:12px;color:#e6e9ee;letter-spacing:-0.130px;transform-origin:0 0;transform:rotate(-90deg) translateY(-10px);">Instrumentation Sp...</span>
<div style="left:1694px;top:318px;width:20px;height:118px;box-sizing:border-box;background:#2e3541;border:1px solid #2a303b;border-right:none;border-radius:4px 0 0 4px;"></div>
<span class="t" style="left:1706px;top:388px;height:20px;line-height:20px;font-size:12px;color:#e6e9ee;letter-spacing:-0.338px;transform-origin:0 0;transform:rotate(-90deg) translateY(-10px);">Lines</span>
<div style="left:1694px;top:436px;width:20px;height:115px;box-sizing:border-box;background:#3b4453;border:1px solid #2c333f;border-right:none;border-radius:4px 0 0 4px;"></div>
<span class="t" style="left:1706px;top:521px;height:20px;line-height:20px;font-size:12px;color:#e6e9ee;letter-spacing:-0.041px;transform-origin:0 0;transform:rotate(-90deg) translateY(-10px);">Equipment</span>
<div style="left:1694px;top:551px;width:20px;height:117px;box-sizing:border-box;background:#2e3541;border:1px solid #2a303b;border-right:none;border-radius:4px 0 0 4px;"></div>
<span class="t" style="left:1706px;top:627px;height:20px;line-height:20px;font-size:12px;color:#e6e9ee;letter-spacing:-0.355px;transform-origin:0 0;transform:rotate(-90deg) translateY(-10px);">Valves</span>
<div style="left:1694px;top:668px;width:20px;height:118px;box-sizing:border-box;background:#2e3541;border:1px solid #2a303b;border-right:none;border-radius:4px 0 0 4px;"></div>
<span class="t" style="left:1706px;top:747px;height:20px;line-height:20px;font-size:12px;color:#e6e9ee;letter-spacing:-0.085px;transform-origin:0 0;transform:rotate(-90deg) translateY(-10px);">Fittings</span>
<div style="left:1694px;top:786px;width:20px;height:118px;box-sizing:border-box;background:#2e3541;border:1px solid #2a303b;border-right:none;border-radius:4px 0 0 4px;"></div>
<span class="t" style="left:1706px;top:877px;height:20px;line-height:20px;font-size:12px;color:#e6e9ee;letter-spacing:-0.154px;transform-origin:0 0;transform:rotate(-90deg) translateY(-10px);">Instruments</span>
<div style="left:1694px;top:906px;width:20px;height:118px;box-sizing:border-box;background:#2e3541;border:1px solid #2a303b;border-right:none;border-radius:4px 0 0 4px;"></div>
<span class="t" style="left:1706px;top:1010px;height:20px;line-height:20px;font-size:12px;color:#e6e9ee;letter-spacing:0.085px;transform-origin:0 0;transform:rotate(-90deg) translateY(-10px);">Non-engineering</span>
<span class="t" style="left:1718px;top:207px;height:20px;line-height:20px;font-size:12px;color:#d6dbe3;letter-spacing:-0.270px;">Pumps</span>
<svg style="left:1747px;top:237px;" width="40" height="40" viewBox="-20.500 -20.500 40 40"><path d="M-10 -7H-6L-4 -5V6L-6 8H-10L-12 6V-5Z M-10 -9H-6 M-8 -9V-7 M-13 -2V3 M-4 1H2 M2 -2H12V3H2Z" stroke="#f2f4f7" stroke-width="1" fill="none" shape-rendering="crispEdges"/></svg>
<svg style="left:1787px;top:237px;" width="40" height="40" viewBox="-20.500 -20.500 40 40"><path d="M-3 -13H2V-2H-3Z M0 -2V4 M-8 4H7V12H-8Z M-10 6V10 M9 6V10 M-10 8H-8 M7 8H9" stroke="#f2f4f7" stroke-width="1" fill="none" shape-rendering="crispEdges"/></svg>
<svg style="left:1826px;top:237px;" width="40" height="40" viewBox="-20.500 -20.500 40 40"><path d="M-4 -13H0V-6H-4Z M-2 -6V10 M-5 0H7V10H-5Z M7 -3V0 M5 -3H9 M-7 1H-5 M-7 8H-5 M-3 10H0V12H-3Z" stroke="#f2f4f7" stroke-width="1" fill="none" shape-rendering="crispEdges"/></svg>
<svg style="left:1867px;top:237px;" width="40" height="40" viewBox="-20.500 -20.500 40 40"><path d="M-16 -6H3V7H-16Z M-12 -9V-6 M1 -9V-6 M-14 -9H-10 M-1 -9H3 M-14 1Q-10.500 -7 -7 1T0 1 M3 1H7 M7 -2H15V3H7Z M9 -2V3 M13 -2V3" stroke="#f2f4f7" stroke-width="1" fill="none" shape-rendering="crispEdges"/></svg>
<svg style="left:1747px;top:279px;" width="40" height="40" viewBox="-20.500 -20.500 40 40"><path d="M-3 -13H2V-5H-3Z M0 -5V-2 M0 -2L-3 0 M0 -2L2 0 M-3 0H2L4 2V10L2 12H-3L-5 10V2Z M-1 3V9L2 6Z" stroke="#f2f4f7" stroke-width="1" fill="none" shape-rendering="crispEdges"/></svg>
<svg style="left:1787px;top:279px;" width="40" height="40" viewBox="-20.500 -20.500 40 40"><path d="M-4 -13H1V-4H-4Z M-1 -4V0 M-5 0H1L3 2V5H8V8H3V10L1 12H-5L-7 10V2Z M-4 4L0 9M0 4L-4 9 M-7 0H-5" stroke="#f2f4f7" stroke-width="1" fill="none" shape-rendering="crispEdges"/></svg>
<svg style="left:1826px;top:279px;" width="40" height="40" viewBox="-20.500 -20.500 40 40"><path d="M-1 -13H2V-7H-1Z M0 -7V-4 M-2 -1L0 -4L3 -1V12H-2Z M-2 -1H3" stroke="#f2f4f7" stroke-width="1" fill="none" shape-rendering="crispEdges"/></svg>
<svg style="left:1867px;top:279px;" width="40" height="40" viewBox="-20.500 -20.500 40 40"><path d="M-16 -5H4V7H-16Z M-12 -8V-5 M1 -8V-5 M-14 -8H-10 M-1 -8H3 M-14 4L-11 -2L-8 4L-5 -2L-2 4L1 -2 M4 1H7 M7 -1H15V4H7Z M9 -1V4 M13 -1V4" stroke="#f2f4f7" stroke-width="1" fill="none" shape-rendering="crispEdges"/></svg>
<div style="left:1718px;top:329px;width:186px;height:1px;background:#323a47;"></div>
<span class="t" style="left:1718px;top:347px;height:20px;line-height:20px;font-size:12px;color:#d6dbe3;letter-spacing:-0.292px;">Compressors and Blowers</span>
<svg style="left:1747px;top:377px;" width="40" height="40" viewBox="-20.500 -20.500 40 40"><path d="M-13 -2H-5V2H-13Z M-5 0H-1 M-1 -6H3L5 -4H12V4H7L4 5H-1Z M0 5V7 M-2 7H2" stroke="#f2f4f7" stroke-width="1" fill="none" shape-rendering="crispEdges"/></svg>
<svg style="left:1787px;top:377px;" width="40" height="40" viewBox="-20.500 -20.500 40 40"><path d="M-13 -2H-6V2H-13Z M-6 0H-1 M-1 -6H13V6H-1Z M8 -6V6 M-1 0H8 M10 -7H12" stroke="#f2f4f7" stroke-width="1" fill="none" shape-rendering="crispEdges"/></svg>
<svg style="left:1826px;top:377px;" width="40" height="40" viewBox="-20.500 -20.500 40 40"><path d="M-12 -3H5V2H-12Z M5 0H8 M8 -1H14V1H8Z M-10 -1H-9M-7 -1H-6M-4 -1H-3M-1 -1H0M2 -1H3 M-11 1H-10M-8 1H-7M-5 1H-4M-2 1H-1M1 1H2" stroke="#f2f4f7" stroke-width="1" fill="none" shape-rendering="crispEdges"/></svg>
<svg style="left:1867px;top:377px;" width="40" height="40" viewBox="-20.500 -20.500 40 40"><path d="M-3 -13H3V-5H-3Z M0 -5V0 M-4 0H4V13H-4Z M-5 4V9 M5 4V9 M-1 3V10L2 6Z M-4 11H4" stroke="#f2f4f7" stroke-width="1" fill="none" shape-rendering="crispEdges"/></svg>
<svg style="left:1867px;top:419px;" width="40" height="40" viewBox="-20.500 -20.500 40 40"><path d="M-3 -13H3V-4H-3Z M0 -4V2 M0 2H5L7 1V5H4V10 M-2 3L-4 5V8L-2 10 M-7 5V9 M-7 7H0 M-5 12L-2 9 M5 12L2 9 M-6 12H6" stroke="#f2f4f7" stroke-width="1" fill="none" shape-rendering="crispEdges"/></svg>
<div style="left:1718px;top:469px;width:186px;height:1px;background:#323a47;"></div>
<span class="t" style="left:1718px;top:486.5px;height:20px;line-height:20px;font-size:12px;color:#d6dbe3;letter-spacing:-0.325px;">TEMA Type Exchangers</span>
<svg style="left:1747px;top:517px;" width="40" height="40" viewBox="-20.500 -20.500 40 40"><path d="M-13 -2H-9V4H-13Z M-9 4H11L13 2V-3L11 -5H-2L-5 -2H-9 M8 -5V4" stroke="#f2f4f7" stroke-width="1" fill="none" shape-rendering="crispEdges"/></svg>
<svg style="left:1787px;top:517px;" width="40" height="40" viewBox="-20.500 -20.500 40 40"><path d="M-13 -4H-9V3H-13Z M-9 -3H9V2H-9Z M9 -4H13V3H9Z M-7 -1H7 M-7 0H7 M-11 -2V1 M11 -2V1" stroke="#f2f4f7" stroke-width="1" fill="none" shape-rendering="crispEdges"/></svg>
<svg style="left:1826px;top:517px;" width="40" height="40" viewBox="-20.500 -20.500 40 40"><path d="M-13 -4H-9V3H-13Z M-9 -3H9V2H-9Z M9 -4H13V3H9Z M-7 -1H6 M-7 0H6 M-11 -2V1 M11 -2V1 M7 -4V3" stroke="#f2f4f7" stroke-width="1" fill="none" shape-rendering="crispEdges"/></svg>
<svg style="left:1867px;top:517px;" width="40" height="40" viewBox="-20.500 -20.500 40 40"><path d="M-13 -4H-8V3H-13Z M-8 -3H9V2H-8Z M9 -4H13V3H9Z M-6 -1H6 M-6 0H6 M-11 -2V1 M-10 -2V1 M11 -2V1 M7 -4V3" stroke="#f2f4f7" stroke-width="1" fill="none" shape-rendering="crispEdges"/></svg>
<svg style="left:1826px;top:559px;" width="40" height="40" viewBox="-20.500 -20.500 40 40"><path d="M-11 -4H-9V3H-11L-13 1V-2Z M-9 -3H13V2H-9Z M-7 -1H11 M-7 0H11 M-11 -2V1" stroke="#f2f4f7" stroke-width="1" fill="none" shape-rendering="crispEdges"/></svg>
<svg style="left:1867px;top:559px;" width="40" height="40" viewBox="-20.500 -20.500 40 40"><path d="M-11 -4H-9V3H-11L-13 1V-2Z M-9 -3H9V2H-9Z M9 -4H13V3H9Z M-7 -1H6 M-7 0H6 M-11 -2V1 M11 -2V1 M7 -4V3" stroke="#f2f4f7" stroke-width="1" fill="none" shape-rendering="crispEdges"/></svg>
<div style="left:1718px;top:609px;width:186px;height:1px;background:#323a47;"></div>
<span class="t" style="left:1718px;top:627px;height:20px;line-height:20px;font-size:12px;color:#d6dbe3;letter-spacing:-0.198px;">Miscellaneous Exchangers</span>
<svg style="left:1747px;top:657px;" width="40" height="40" viewBox="-20.500 -20.500 40 40"><g shape-rendering="geometricPrecision"><path d="M-1 2m-12 0a12 12 0 1 0 24 0a12 12 0 1 0 -24 0 M-1 2m-7 0a7 7 0 1 0 14 0a7 7 0 1 0 -14 0 M-4 0L-1 2L2 0 M-4 4L-1 2L2 4 M-14 -15H-7 M5 -15H12 M-10 -15V-11L-5 -4 M9 -15V-11L3 -4 M-16 2H-13 M11 2H14 M-16 -2V6 M14 -2V6 M-13 2H-6 M4 2H11" stroke="#f2f4f7" stroke-width="1" fill="none"/></g></svg>
<svg style="left:1787px;top:657px;" width="40" height="40" viewBox="-20.500 -20.500 40 40"><path d="M-13 0L-9 -5V-6H12V-2H10V2H12V6H-9V5Z" stroke="#f2f4f7" stroke-width="1" fill="#f2f4f7" shape-rendering="crispEdges"/><path d="M-8 0H8" stroke="#3b4453" stroke-width="2" shape-rendering="crispEdges"/></svg>
<svg style="left:1827px;top:657px;" width="40" height="40" viewBox="-20.500 -20.500 40 40"><path d="M-12 -10V12 M-11 -10V12 M-10 -10V12 M10 -10V12 M11 -10V12 M12 -10V12 M-13 12H13 M-13 11H13 M-13 9H13 M-13 -6H13 M-13 -7H-9 M9 -7H13 M-7 -8V9 M-5 -6V9 M-3 -8V9 M3 -8V9 M5 -6V9 M7 -8V9 M-1 -3V9 M0 -3V9 M1 -3V9 M-8 2H-2 M2 2H8" stroke="#f2f4f7" stroke-width="1" fill="none" shape-rendering="crispEdges"/></svg>
<svg style="left:1867px;top:657px;" width="40" height="40" viewBox="-20.500 -20.500 40 40"><path d="M-11 -10H11L13 -8V1L11 3H-11L-13 1V-8Z" stroke="#f2f4f7" stroke-width="1" fill="#f2f4f7" shape-rendering="crispEdges"/><path d="M-10 -3H-2 M1 -3H10" stroke="#3b4453" stroke-width="2" shape-rendering="crispEdges"/><path d="M-1 3V6 M1 3V6 M-2 6H2V10H-2Z" stroke="#f2f4f7" stroke-width="2" fill="none" shape-rendering="crispEdges"/></svg>
<div style="left:1718px;top:707px;width:186px;height:1px;background:#323a47;"></div>
<span class="t" style="left:1718px;top:725px;height:20px;line-height:20px;font-size:12px;color:#d6dbe3;letter-spacing:-0.269px;">Storage Tanks</span>
<svg style="left:1747px;top:755px;" width="40" height="40" viewBox="-20.500 -20.500 40 40"><path d="M-13 -7H12V9H-13Z M-11 -7L-7 -9H6L10 -7 M-6 -10H5" stroke="#f2f4f7" stroke-width="1" fill="none" shape-rendering="crispEdges"/></svg>
<svg style="left:1787px;top:755px;" width="40" height="40" viewBox="-20.500 -20.500 40 40"><path d="M-13 -9V8H13V-9" stroke="#f2f4f7" stroke-width="1" fill="none" shape-rendering="crispEdges"/></svg>
<svg style="left:1826px;top:755px;" width="40" height="40" viewBox="-20.500 -20.500 40 40"><path d="M-12 -7H13V9H-12Z M-12 -4H13 M-10 -7L-4 -9L0 -10L5 -9L11 -7 M-10 -5H-9 M10 -5H11" stroke="#f2f4f7" stroke-width="1" fill="none" shape-rendering="crispEdges"/></svg>
<svg style="left:1867px;top:755px;" width="40" height="40" viewBox="-20.500 -20.500 40 40"><path d="M-13 -9V8H13V-9 M-13 -5H13 M-11 -7H-10 M10 -7H11 M-13 6L4 -1L0 -5" stroke="#f2f4f7" stroke-width="1" fill="none" shape-rendering="crispEdges"/></svg>
<svg style="left:1826px;top:797px;" width="40" height="40" viewBox="-20.500 -20.500 40 40"><path d="M-12 -7H13V9H-12Z M-10 -7L-4 -9L0 -10L5 -9L11 -7" stroke="#f2f4f7" stroke-width="1" fill="none" shape-rendering="crispEdges"/></svg>
<svg style="left:1867px;top:797px;" width="40" height="40" viewBox="-20.500 -20.500 40 40"><path d="M-13 -7H13V9H-13Z M-13 8H13 M-11 -7L-7 -9H7L11 -7 M-5 -10H5" stroke="#f2f4f7" stroke-width="1" fill="none" shape-rendering="crispEdges"/></svg>
<div style="left:1718px;top:847px;width:186px;height:1px;background:#323a47;"></div>
<span class="t" style="left:1718px;top:865px;height:20px;line-height:20px;font-size:12px;color:#d6dbe3;letter-spacing:-0.299px;">Storage Sphere and Furnace</span>
<svg style="left:1827px;top:894px;" width="40" height="40" viewBox="-20.500 -20.500 40 40"><g shape-rendering="geometricPrecision"><path d="M0 -1m-12 0a12 12 0 1 0 24 0a12 12 0 1 0 -24 0" stroke="#f2f4f7" stroke-width="1" fill="none"/></g><path d="M-12 -1V13 M12 -1V13" stroke="#f2f4f7" stroke-width="1" fill="none" shape-rendering="crispEdges"/></svg>
<svg style="left:1867px;top:894px;" width="40" height="40" viewBox="-20.500 -20.500 40 40"><path d="M-3 -13H3V-6H-3Z M-1 -11H1V-8H-1Z M-3 -6L-6 -1V13H6V-1L3 -6 M-4 1H4 M4 1L-3 11H4" stroke="#f2f4f7" stroke-width="1" fill="none" shape-rendering="crispEdges"/></svg>
<div style="left:1718px;top:945px;width:186px;height:1px;background:#323a47;"></div>
<span class="t" style="left:1718px;top:963px;height:20px;line-height:20px;font-size:12px;color:#d6dbe3;letter-spacing:-0.348px;">Vessel and Miscellaneous Vessel</span>
<svg style="left:1787px;top:1009px;" width="40" height="40" viewBox="-20.500 -20.500 40 40"><path d="M-2 -13H1L3 -11V12H-4V-11Z M-4 9H3 M-2 11H1" stroke="#f2f4f7" stroke-width="1" fill="none" shape-rendering="crispEdges"/></svg>
<svg style="left:1827px;top:1009px;" width="40" height="40" viewBox="-20.500 -20.500 40 40"><path d="M-2 -13H1L3 -11V12H-4V-11Z M-4 -9H3 M-4 -2H3 M-3 -7L2 -3M2 -7L-3 -3 M-4 1H3 M-4 7H3 M-2 11H1 M-2 -11H1" stroke="#f2f4f7" stroke-width="1" fill="none" shape-rendering="crispEdges"/></svg>
<svg style="left:1867px;top:1009px;" width="40" height="40" viewBox="-20.500 -20.500 40 40"><path d="M-2 -13H1L3 -11V12H-4V-11Z M-3 -9H-1M0 -9H2 M-3 -5H-1M0 -5H2 M-3 -1H-1M0 -1H2 M-3 3H-1M0 3H2 M-4 7H3 M-1 -9V5 M0 -9V5 M-2 11H1 M-3 -11H2" stroke="#f2f4f7" stroke-width="1" fill="none" shape-rendering="crispEdges"/></svg>
<span class="t" style="left:1718px;top:979px;height:20px;line-height:20px;font-size:12px;color:#d6dbe3;letter-spacing:-0.240px;">Details</span>
<div style="left:1292px;top:408px;width:324px;height:425px;box-sizing:border-box;background:#3b4453;border:1.500px solid #1c2129;border-radius:4px;"></div>
<div style="left:1293.500px;top:409.500px;width:21px;height:422px;background:#2e3541;border-radius:3px 0 0 3px;"></div>
<svg style="left:1299px;top:414px;" width="10" height="10" viewBox="0 0 10 10"><path d="M1 1L9 9M9 1L1 9" stroke="#f0f2f5" stroke-width="2"/></svg>
<svg style="left:1299px;top:432px;" width="10" height="11" viewBox="0 0 10 11"><path d="M1 0V11" stroke="#f0f2f5" stroke-width="1.600"/><path d="M3 5.500L9 1V10Z" fill="#f0f2f5"/><path d="M5.500 5.500H9" stroke="#2e3541" stroke-width="1.500"/></svg>
<svg style="left:1298px;top:451px;" width="12" height="12" viewBox="0 0 12 12"><path d="M6 0V12M0 6H12M1.800 1.800L10.200 10.200M10.200 1.800L1.800 10.200" stroke="#f0f2f5" stroke-width="2"/><circle cx="6" cy="6" r="3.600" fill="#f0f2f5"/><circle cx="6" cy="6" r="1.700" fill="#2e3541"/></svg>
<span class="t" style="left:1304px;top:804px;height:20px;line-height:20px;font-size:12px;color:#dfe3e8;letter-spacing:-0.557px;transform-origin:0 0;transform:rotate(-90deg) translateY(-10px);">VALIDATION SUMMARY</span>
<div style="left:1296px;top:815px;width:16px;height:16px;background:#eceef1;"></div>
<svg style="left:1297px;top:817px;" width="14" height="12" viewBox="0 0 14 12"><path d="M1 12L6 1Q7 0 8 1L13 12H10L8.500 8L4.500 9L3.500 12Z M5.500 6.500L8 6L7 3.500Z" fill="#d3222a" fill-rule="evenodd"/></svg>
<span class="t" style="left:1338px;top:423px;height:20px;line-height:20px;font-size:12px;color:#e6e9ee;letter-spacing:-0.252px;">Current project: Class 1</span>
<div style="left:1527px;top:420px;width:60px;height:30px;box-sizing:border-box;border:1px solid #7b8594;"></div>
<div style="left:1557px;top:421px;width:1px;height:28px;background:#7b8594;"></div>
<svg style="left:1533px;top:427px;" width="18" height="17" viewBox="0 0 18 17"><circle cx="8.500" cy="8" r="7" fill="#5fd97a" stroke="#1f5f3a" stroke-width=".8"/><path d="M5 8L7.500 10.500L11.500 6" stroke="#e6fbe9" stroke-width="1.100" fill="none"/><path d="M10.500 15L15 11" stroke="#8cc6f5" stroke-width="1.800"/><circle cx="15.300" cy="10.300" r="1.900" fill="none" stroke="#8cc6f5" stroke-width="1.500"/></svg>
<svg style="left:1563px;top:427px;" width="18" height="16" viewBox="0 0 18 16"><path d="M3 7A6.200 5.800 0 0 1 14 4.500" stroke="#d2d6dc" stroke-width="2.200" fill="none"/><path d="M15 9A6.200 5.800 0 0 1 4 11.500" stroke="#d2d6dc" stroke-width="2.200" fill="none"/><path d="M16.500 1.500V7H11Z M1.500 14.500V9H7Z" fill="#d2d6dc"/></svg>
<div style="left:1339px;top:457px;width:248px;height:189px;box-sizing:border-box;border:1px solid #aeb5bf;"></div>
<div style="left:1340px;top:458px;width:246px;height:187px;box-sizing:border-box;border:1px solid #ffffff;border-top:none;border-left:none;"></div>
<svg style="left:0;top:0" width="1920" height="1080" viewBox="0 0 1920 1080"><path d="M1390.500 459V627 M1409.500 459V486 M1409.500 513V558 M1409.500 585V612" stroke="#8f98a6" stroke-dasharray="1 1"/><path d="M1409 469.0H1421" stroke="#8f98a6" stroke-dasharray="1 1"/><path d="M1423 462.7L1434 473.7M1434 462.7L1423 473.7" stroke="#f4626b" stroke-width="2.200"/><path d="M1409 487.0H1421" stroke="#8f98a6" stroke-dasharray="1 1"/><path d="M1423 480.7L1434 491.7M1434 480.7L1423 491.7" stroke="#f4626b" stroke-width="2.200"/><path d="M1409 523.0H1421" stroke="#8f98a6" stroke-dasharray="1 1"/><path d="M1423 516.7L1434 527.7M1434 516.7L1423 527.7" stroke="#f4626b" stroke-width="2.200"/><path d="M1409 541.0H1421" stroke="#8f98a6" stroke-dasharray="1 1"/><path d="M1423 534.7L1434 545.7M1434 534.7L1423 545.7" stroke="#f4626b" stroke-width="2.200"/><path d="M1409 559.0H1421" stroke="#8f98a6" stroke-dasharray="1 1"/><path d="M1423 552.7L1434 563.7M1434 552.7L1423 563.7" stroke="#f4626b" stroke-width="2.200"/><path d="M1409 595.0H1421" stroke="#8f98a6" stroke-dasharray="1 1"/><path d="M1423 588.7L1434 599.7M1434 588.7L1423 599.7" stroke="#f4626b" stroke-width="2.200"/><path d="M1409 613.0H1421" stroke="#8f98a6" stroke-dasharray="1 1"/><path d="M1423 606.7L1434 617.7M1434 606.7L1423 617.7" stroke="#f4626b" stroke-width="2.200"/><rect x="1386.500" y="501.0" width="8" height="8" fill="#eceef1" stroke="#8e949e"/><path d="M1388 505.0H1393" stroke="#222" stroke-width="1.200"/><path d="M1402 496.5H1408L1410 498.5H1418V509.5H1402Z" fill="#7fc4f7"/><path d="M1402 496.5H1408L1410 498.5H1402Z" fill="#5aa6e6"/><rect x="1386.500" y="573.0" width="8" height="8" fill="#eceef1" stroke="#8e949e"/><path d="M1388 577.0H1393" stroke="#222" stroke-width="1.200"/><path d="M1402 568.5H1408L1410 570.5H1418V581.5H1402Z" fill="#7fc4f7"/><path d="M1402 568.5H1408L1410 570.5H1402Z" fill="#5aa6e6"/><path d="M1402 625H1408L1410 627H1402Z" fill="#5aa6e6"/></svg>
<div style="left:1439px;top:514px;width:128px;height:17px;background:#f7f8fa;"></div>
<span class="t" style="left:1441px;top:457.5px;height:20px;line-height:20px;font-size:12px;color:#e6e9ee;letter-spacing:-0.394px;">Leader</span>
<span class="t" style="left:1441px;top:475.5px;height:20px;line-height:20px;font-size:12px;color:#e6e9ee;letter-spacing:-0.394px;">Leader</span>
<span class="t" style="left:1422px;top:493.5px;height:20px;line-height:20px;font-size:12px;color:#e6e9ee;letter-spacing:0.085px;">Unresolved off-page conne</span>
<span class="t" style="left:1441px;top:511.5px;height:20px;line-height:20px;font-size:12px;color:#111;letter-spacing:-0.130px;">Unlabeled Off Page Con</span>
<span class="t" style="left:1441px;top:529.5px;height:20px;line-height:20px;font-size:12px;color:#e6e9ee;letter-spacing:-0.130px;">Unlabeled Off Page Con</span>
<span class="t" style="left:1441px;top:547.5px;height:20px;line-height:20px;font-size:12px;color:#e6e9ee;letter-spacing:-0.130px;">Unlabeled Off Page Con</span>
<span class="t" style="left:1422px;top:565.5px;height:20px;line-height:20px;font-size:12px;color:#e6e9ee;letter-spacing:0.072px;">Unconnected components</span>
<span class="t" style="left:1441px;top:583.5px;height:20px;line-height:20px;font-size:12px;color:#e6e9ee;letter-spacing:-0.146px;">P-101-A</span>
<span class="t" style="left:1441px;top:601.5px;height:20px;line-height:20px;font-size:12px;color:#e6e9ee;letter-spacing:-0.289px;">P-101-B</span>
<div style="left:1339px;top:459px;width:229px;height:168px;overflow:hidden;">
<span class="t" style="left:83px;top:160.5px;height:20px;line-height:20px;font-size:12px;color:#e6e9ee;letter-spacing:-0.038px;">Orphaned annotations</span>
</div>
<div style="left:1568px;top:459px;width:17px;height:168px;background:#f0f0f0;"></div>
<div style="left:1570px;top:577px;width:14px;height:21px;background:#cdcdcd;"></div>
<svg style="left:1572px;top:464px;" width="9" height="6" viewBox="0 0 9 6"><path d="M0.500 5.500L4.500 1.500L8.500 5.500" stroke="#333" stroke-width="1.600" fill="none"/></svg>
<svg style="left:1572px;top:616px;" width="9" height="6" viewBox="0 0 9 6"><path d="M0.500 0.500L4.500 4.500L8.500 0.500" stroke="#333" stroke-width="1.600" fill="none"/></svg>
<div style="left:1341px;top:627px;width:244px;height:17px;background:#f0f0f0;"></div>
<div style="left:1358px;top:628px;width:166px;height:15px;background:#cdcdcd;"></div>
<svg style="left:1346px;top:631px;" width="6" height="9" viewBox="0 0 6 9"><path d="M5 0.500L1 4.500L5 8.500" stroke="#333" stroke-width="1.600" fill="none"/></svg>
<svg style="left:1556px;top:631px;" width="6" height="9" viewBox="0 0 6 9"><path d="M1 0.500L5 4.500L1 8.500" stroke="#333" stroke-width="1.600" fill="none"/></svg>
<div style="left:1340px;top:656px;width:11px;height:11px;background:#fff;"></div>
<span class="t" style="left:1356px;top:651px;height:20px;line-height:20px;font-size:12px;color:#e6e9ee;letter-spacing:-0.098px;">Don&#x27;t display errors marked as ignored</span>
<div style="left:1341px;top:675px;width:246px;height:17px;background:#2e3541;"></div>
<span class="t" style="left:1349px;top:673px;height:20px;line-height:20px;font-size:12px;color:#ffffff;letter-spacing:-0.050px;font-weight:bold;">Details</span>
<svg style="left:1571px;top:677px;" width="12" height="13" viewBox="0 0 12 13"><path d="M1 6L6 1L11 6 M1 12L6 7L11 12" stroke="#fff" stroke-width="1.800" fill="none"/></svg>
<div style="left:1363px;top:693px;width:89px;height:19px;background:#3c8df0;"></div>
<div style="left:1362px;top:692px;width:225px;height:1px;background:#9aa2ae;"></div>
<div style="left:1362px;top:712px;width:225px;height:1px;background:#9aa2ae;"></div>
<div style="left:1362px;top:692px;width:1px;height:40px;background:#9aa2ae;"></div>
<div style="left:1452px;top:692px;width:1px;height:40px;background:#9aa2ae;"></div>
<span class="t" style="left:1366px;top:693px;height:20px;line-height:20px;font-size:12px;color:#ffffff;letter-spacing:-0.168px;">Error type</span>
<span class="t" style="left:1456px;top:693px;height:20px;line-height:20px;font-size:12px;color:#e6e9ee;letter-spacing:-0.049px;">Unresolved off-page c...</span>
<span class="t" style="left:1366px;top:713px;height:20px;line-height:20px;font-size:12px;color:#e6e9ee;letter-spacing:-0.085px;">Error action</span>
<span class="t" style="left:1456px;top:713px;height:20px;line-height:20px;font-size:12px;color:#e6e9ee;letter-spacing:-0.199px;">&lt;Unassigned&gt;</span>
<div style="left:1339px;top:733px;width:248px;height:70px;box-sizing:border-box;border:1px solid #eef0f3;"></div>
<div style="left:1568px;top:734px;width:18px;height:68px;background:#fdfdfd;"></div>
<svg style="left:1572px;top:739px;" width="9" height="6" viewBox="0 0 9 6"><path d="M0.500 5.500L4.500 1.500L8.500 5.500" stroke="#c9c9c9" stroke-width="1.300" fill="none"/></svg>
<svg style="left:1572px;top:791px;" width="9" height="6" viewBox="0 0 9 6"><path d="M0.500 0.500L4.500 4.500L8.500 0.500" stroke="#c9c9c9" stroke-width="1.300" fill="none"/></svg>
<span class="t" style="left:1345px;top:733px;height:20px;line-height:20px;font-size:12px;color:#e6e9ee;letter-spacing:0.166px;">Off-page connectors that don&#x27;t point to</span>
<span class="t" style="left:1345px;top:748px;height:20px;line-height:20px;font-size:12px;color:#e6e9ee;letter-spacing:0.038px;">another drawing.</span>
<div style="left:0px;top:1051px;width:1920px;height:29px;background:#222933;"></div>
<div style="left:1286px;top:1053px;width:634px;height:25px;background:#2d3440;"></div>
<div style="left:1333px;top:1053px;width:3px;height:25px;background:#222933;"></div>
<div style="left:1399px;top:1053px;width:3px;height:25px;background:#222933;"></div>
<div style="left:1568px;top:1053px;width:3px;height:25px;background:#222933;"></div>
<div style="left:1748px;top:1053px;width:3px;height:25px;background:#222933;"></div>
<div style="left:1788px;top:1053px;width:3px;height:25px;background:#222933;"></div>
<div style="left:1816px;top:1053px;width:3px;height:25px;background:#222933;"></div>
<div style="left:1843px;top:1053px;width:3px;height:25px;background:#222933;"></div>
<div style="left:1870px;top:1053px;width:3px;height:25px;background:#222933;"></div>
<span class="t" style="left:1289px;top:1054.5px;height:20px;line-height:20px;font-size:12px;color:#ffffff;letter-spacing:-0.335px;">MODEL</span>
<div style="left:1361px;top:1054px;width:22px;height:22px;background:#5a8fd0;"></div>
<div style="left:1427px;top:1054px;width:22px;height:22px;background:#5a8fd0;"></div>
<div style="left:1506px;top:1054px;width:22px;height:22px;background:#5a8fd0;"></div>
<div style="left:1531px;top:1054px;width:22px;height:22px;background:#5a8fd0;"></div>
<svg style="left:1388px;top:1063px;" width="7" height="4" viewBox="0 0 7 4"><path d="M0 0H7L3.500 4Z" fill="#cfd4db"/></svg>
<svg style="left:1454px;top:1063px;" width="7" height="4" viewBox="0 0 7 4"><path d="M0 0H7L3.500 4Z" fill="#cfd4db"/></svg>
<svg style="left:1493px;top:1063px;" width="7" height="4" viewBox="0 0 7 4"><path d="M0 0H7L3.500 4Z" fill="#cfd4db"/></svg>
<svg style="left:1558px;top:1063px;" width="7" height="4" viewBox="0 0 7 4"><path d="M0 0H7L3.500 4Z" fill="#cfd4db"/></svg>
<svg style="left:1713px;top:1063px;" width="7" height="4" viewBox="0 0 7 4"><path d="M0 0H7L3.500 4Z" fill="#cfd4db"/></svg>
<svg style="left:1779px;top:1063px;" width="7" height="4" viewBox="0 0 7 4"><path d="M0 0H7L3.500 4Z" fill="#cfd4db"/></svg>
<svg style="left:1340px;top:1057px;" width="16" height="16" viewBox="0 0 16 16"><path d="M3.500 0V16M8 0V16M12.500 0V16M0 3.500H16M0 8H16M0 12.500H16" stroke="#e6e9ee" stroke-width="1.200"/></svg>
<svg style="left:1366px;top:1059px;" width="13" height="13" viewBox="0 0 13 13"><rect x="0.0" y="0.0" width="2" height="2" fill="#fff"/><rect x="5.5" y="0.0" width="2" height="2" fill="#fff"/><rect x="11.0" y="0.0" width="2" height="2" fill="#fff"/><rect x="0.0" y="5.5" width="2" height="2" fill="#fff"/><rect x="5.5" y="5.5" width="2" height="2" fill="#fff"/><rect x="11.0" y="5.5" width="2" height="2" fill="#fff"/><rect x="0.0" y="11.0" width="2" height="2" fill="#fff"/><rect x="5.5" y="11.0" width="2" height="2" fill="#fff"/><rect x="11.0" y="11.0" width="2" height="2" fill="#fff"/></svg>
<svg style="left:1406px;top:1057px;" width="16" height="16" viewBox="0 0 16 16"><path d="M2 0V14H16" stroke="#e6e9ee" stroke-width="1.600" fill="none"/><path d="M2 9H7V14" stroke="#e6e9ee" stroke-width="1" fill="none"/></svg>
<svg style="left:1430px;top:1057px;" width="17" height="17" viewBox="0 0 17 17"><circle cx="8" cy="9" r="6.500" stroke="#fff" stroke-width="1.500" fill="none"/><path d="M8 9H16M8 9L15 2" stroke="#fff" stroke-width="1.300"/></svg>
<svg style="left:1470px;top:1056px;" width="16" height="18" viewBox="0 0 16 18"><path d="M8 0V18" stroke="#4fd071" stroke-width="1.200"/><path d="M1 4L15 14" stroke="#e06a6a" stroke-width="1.200"/><circle cx="8" cy="9" r="1.300" fill="#2d3440" stroke="#e6e9ee" stroke-width=".9"/></svg>
<svg style="left:1509px;top:1057px;" width="16" height="16" viewBox="0 0 16 16"><path d="M1 15H15M1 15L13 3" stroke="#fff" stroke-width="1.500" fill="none"/><path d="M1 15H8A7 7 0 0 0 6 10Z" fill="#fff" opacity=".6"/></svg>
<svg style="left:1534px;top:1057px;" width="16" height="16" viewBox="0 0 16 16"><rect x="3" y="3" width="12" height="12" fill="none" stroke="#fff" stroke-width="1.400"/><rect x="0.700" y="0.700" width="5" height="5" fill="#4a86cf" stroke="#fff" stroke-width="1.300"/></svg>
<svg style="left:1575px;top:1056px;" width="17" height="17" viewBox="0 0 17 17"><path d="M0 4V0H4M13 0H17V4M17 13V17H13M4 17H0V13" stroke="#e6e9ee" stroke-width="1.600" fill="none" stroke-dasharray="2 1.300"/><rect x="5" y="6" width="8" height="7" fill="none" stroke="#e6e9ee" stroke-width="1.400"/></svg>
<svg style="left:1599px;top:1056px;" width="18" height="18" viewBox="0 0 18 18"><path d="M9 2L1 16L9 11L15 16Z" fill="#e6e9ee"/><circle cx="14.500" cy="4" r="2.300" fill="none" stroke="#e6e9ee" stroke-width="1.200"/></svg>
<svg style="left:1623px;top:1056px;" width="18" height="18" viewBox="0 0 18 18"><path d="M8 2L0 16L8 11L14 16Z" fill="#e6e9ee"/><path d="M14 0L15 3L18 4L15 5L14 8L13 5L10 4L13 3Z" fill="#e6e9ee"/></svg>
<svg style="left:1647px;top:1056px;" width="16" height="18" viewBox="0 0 16 18"><rect x="1" y="8" width="13" height="9" rx="1" fill="#6cbcf7"/><path d="M3.500 8V5Q7.500 0 11.500 5V8" stroke="#6cbcf7" stroke-width="2.200" fill="none"/><rect x="6.800" y="10.500" width="1.600" height="4" fill="#2a5f94"/></svg>
<svg style="left:1672px;top:1057px;" width="16" height="16" viewBox="0 0 16 16"><path d="M0 4V0H4M12 0H16V4M16 12V16H12M4 16H0V12" stroke="#6f7783" stroke-width="1.600" fill="none"/><rect x="5" y="5" width="6" height="6" fill="none" stroke="#6f7783" stroke-width="1.300"/></svg>
<span class="t" style="left:1695.5px;top:1054.5px;height:20px;line-height:20px;font-size:11px;color:#8f97a3;letter-spacing:-0.466px;font-weight:bold;">1:1</span>
<svg style="left:1729px;top:1056px;" width="17" height="18" viewBox="0 0 17 18"><path d="M0 4V0H4M13 0H17V4M17 11V14H14M3 14H0V11" stroke="#e6e9ee" stroke-width="1.600" fill="none"/><path d="M8.500 5L3 17L8.500 13L14 17Z" fill="#e6e9ee"/></svg>
<svg style="left:1755px;top:1056px;" width="17" height="17" viewBox="0 0 17 17"><path d="M8.500 0V17M0 8.500H17M2.500 2.500L14.500 14.500M14.500 2.500L2.500 14.500" stroke="#e6e9ee" stroke-width="2.600"/><circle cx="8.500" cy="8.500" r="5.500" fill="#e6e9ee"/><circle cx="8.500" cy="8.500" r="2.500" fill="#2d3440"/></svg>
<svg style="left:1795px;top:1057px;" width="16" height="16" viewBox="0 0 16 16"><path d="M8 0V16M0 8H16" stroke="#e6e9ee" stroke-width="2"/></svg>
<svg style="left:1821px;top:1056px;" width="18" height="18" viewBox="0 0 18 18"><rect x="1" y="1" width="6" height="6" fill="none" stroke="#e6e9ee" stroke-width="1.300"/><circle cx="13.500" cy="8" r="3" fill="none" stroke="#e6e9ee" stroke-width="1.300"/><path d="M6 10L2.500 16.500H9.500Z" fill="none" stroke="#e6e9ee" stroke-width="1.300"/></svg>
<svg style="left:1847px;top:1055px;" width="19" height="20" viewBox="0 0 19 20"><path d="M4 5H13L17 9V17H4Z" fill="#4a86cf"/><path d="M4 13Q10 11 17 14V17H4Z" fill="#f0c23c"/><path d="M4 0V12M0 4H10" stroke="#fff" stroke-width="1.200"/><circle cx="4" cy="4" r="1.800" fill="#fff"/><path d="M10 15L13 18L19 11" stroke="#3ecf74" stroke-width="2.200" fill="none"/></svg>
<svg style="left:1875px;top:1057px;" width="16" height="14" viewBox="0 0 16 14"><rect x="0.700" y="0.700" width="14.600" height="12.600" fill="none" stroke="#e6e9ee" stroke-width="1.400"/><path d="M3.500 10.500L7 7M3.500 7.500V10.500H6.500M12.500 3.500L9 7M12.500 6.500V3.500H9.500" stroke="#e6e9ee" stroke-width="1.200" fill="none"/></svg>
<svg style="left:1898px;top:1058px;" width="16" height="13" viewBox="0 0 16 13"><path d="M0 1.500H16M0 6.500H16M0 11.500H16" stroke="#e6e9ee" stroke-width="2.200"/></svg>
</body></html>
